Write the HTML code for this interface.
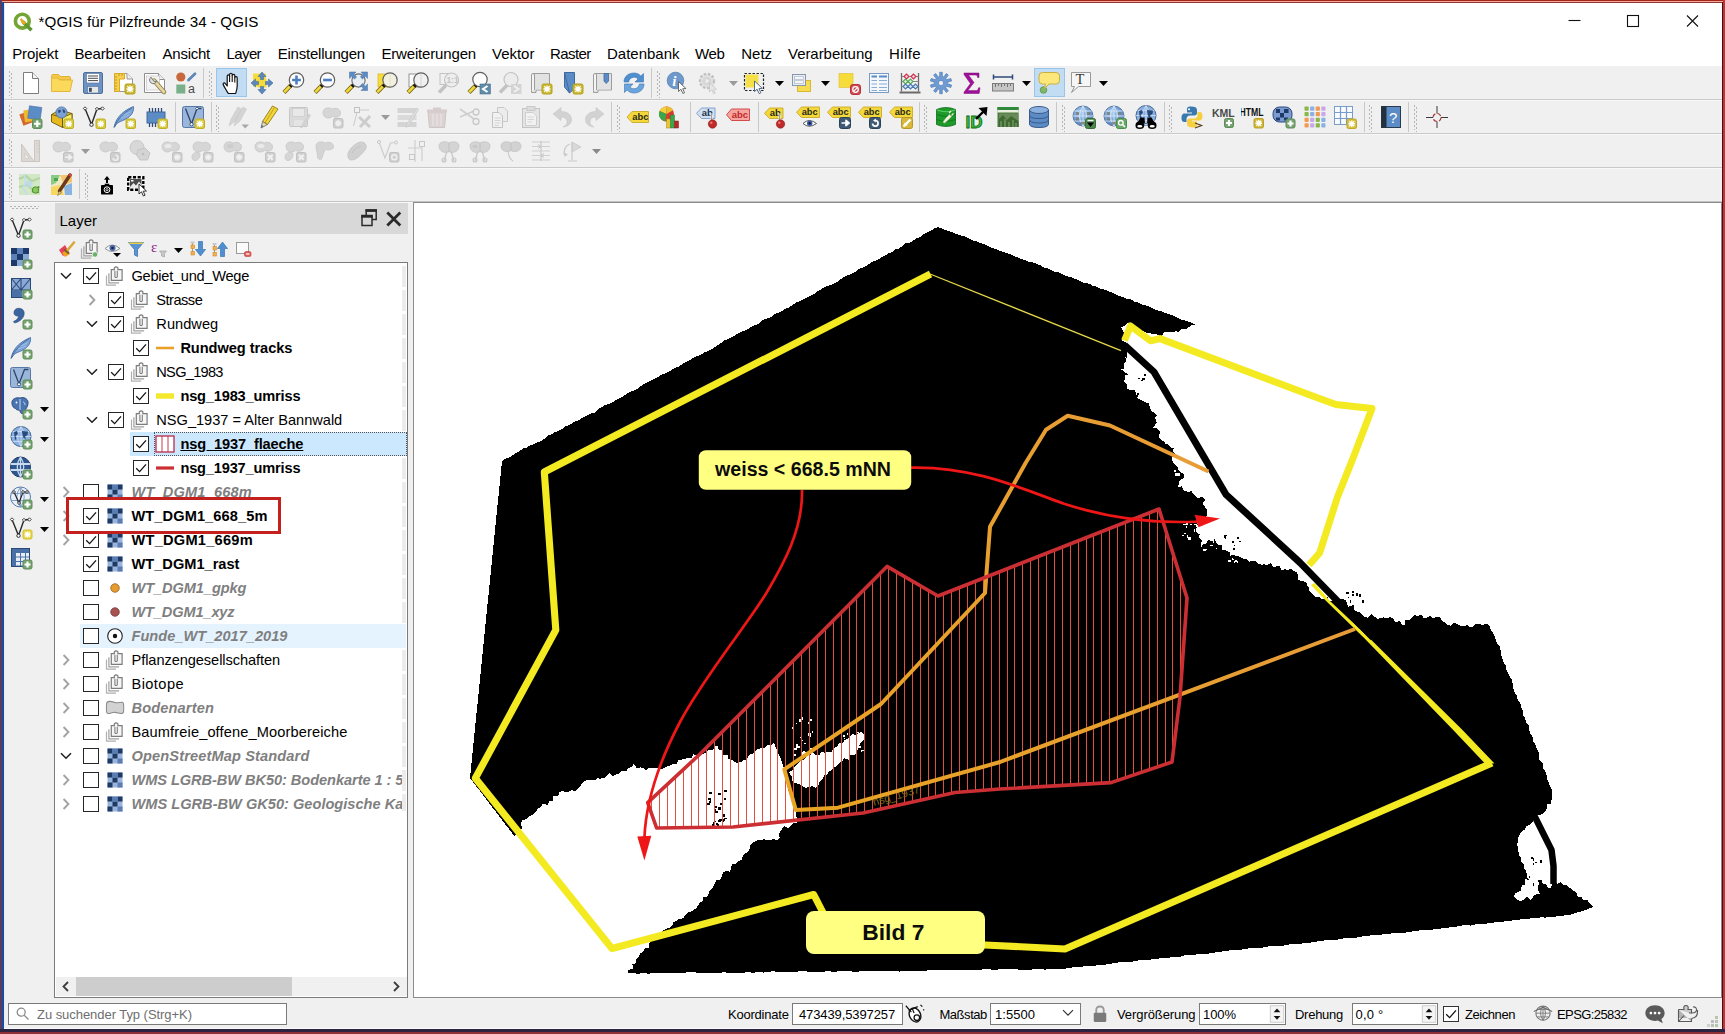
<!DOCTYPE html><html lang="de"><head><meta charset="utf-8"><title>QGIS für Pilzfreunde 34</title><style>
html,body{margin:0;padding:0}
body{width:1725px;height:1034px;position:relative;overflow:hidden;background:#f0f0f0;font-family:"Liberation Sans",sans-serif;color:#000}
.t{position:absolute;white-space:nowrap}
.abs{position:absolute}
.b{position:absolute;box-sizing:border-box}
.hv{position:absolute;width:3px;background-image:radial-gradient(circle,#b4b4b4 0.8px,transparent 1.1px);background-size:3px 4px}
.hh{position:absolute;height:3px;background-image:radial-gradient(circle,#b4b4b4 0.8px,transparent 1.1px);background-size:4px 3px}
.sep{position:absolute;width:1px;background:#c8c8c8}
.cb{position:absolute;box-sizing:border-box;width:16px;height:16px;border:1px solid #262626;background:#fff}
.cb svg{position:absolute;left:0;top:0}
.in{position:absolute;box-sizing:border-box;border:1px solid #7a7a7a;background:#fff}
</style></head><body><div class="b" style="left:0px;top:0px;width:1725px;height:66px;background:#fff;"></div><div class="b" style="left:0px;top:0px;width:1725px;height:1px;background:#a3281a;"></div><div class="b" style="left:0px;top:1px;width:1725px;height:1px;background:#f9a296;"></div><div class="b" style="left:0px;top:2px;width:1725px;height:1px;background:#8c3a36;"></div><div class="b" style="left:0px;top:0px;width:1.5px;height:1034px;background:#5b3b5e;"></div><div class="b" style="left:1.5px;top:2px;width:2px;height:1030px;background:#1d4b9b;"></div><div class="b" style="left:3.5px;top:3px;width:1px;height:1026px;background:#dfeefa;"></div><div class="b" style="left:1722px;top:2px;width:1.5px;height:1030px;background:#3a1414;"></div><div class="b" style="left:1723px;top:0px;width:2px;height:1034px;background:#c6322f;"></div><div class="b" style="left:0px;top:1029px;width:1725px;height:3px;background:#2b2342;"></div><div class="b" style="left:0px;top:1032px;width:1725px;height:2px;background:#8f3036;"></div><div class="b" style="left:4px;top:1028px;width:1718px;height:1px;background:#fbfbfb;"></div><svg class="abs" style="left:12px;top:11px" width="22" height="22" viewBox="0 0 22 22"><circle cx="10.3" cy="10.2" r="6.9" fill="none" stroke="#73a534" stroke-width="3.6"/><path d="M10.5 10.5 L19.5 19.2" stroke="#5e962f" stroke-width="3.6" fill="none"/><path d="M8.2 7.6 L12.6 12.4 L10.6 13.2 Z" fill="#eeb41a"/><path d="M8.6 8 L13.2 12.8" stroke="#e8a818" stroke-width="2.4"/></svg><span class="t" style="left:38.6px;top:12.2px;height:20px;line-height:20px;font-size:15.2px;letter-spacing:0.039px;color:#000;">*QGIS für Pilzfreunde 34 - QGIS</span><svg class="abs" style="left:1560px;top:8px" width="150" height="26" viewBox="0 0 150 26" fill="none" stroke="#111" stroke-width="1.1"><path d="M8.5 12.5H20.5"/><rect x="67.5" y="7.5" width="11" height="11"/><path d="M127 7.5L138 18.5M138 7.5L127 18.5"/></svg><span class="t" style="left:12.2px;top:44.2px;height:20px;line-height:20px;font-size:15.0px;letter-spacing:-0.084px;color:#000;">Projekt</span><span class="t" style="left:74.4px;top:44.2px;height:20px;line-height:20px;font-size:15.0px;letter-spacing:-0.126px;color:#000;">Bearbeiten</span><span class="t" style="left:162.6px;top:44.2px;height:20px;line-height:20px;font-size:15.0px;letter-spacing:-0.256px;color:#000;">Ansicht</span><span class="t" style="left:226.6px;top:44.2px;height:20px;line-height:20px;font-size:15.0px;letter-spacing:-0.625px;color:#000;">Layer</span><span class="t" style="left:277.7px;top:44.2px;height:20px;line-height:20px;font-size:15.0px;letter-spacing:-0.213px;color:#000;">Einstellungen</span><span class="t" style="left:381.4px;top:44.2px;height:20px;line-height:20px;font-size:15.0px;letter-spacing:-0.164px;color:#000;">Erweiterungen</span><span class="t" style="left:492.0px;top:44.2px;height:20px;line-height:20px;font-size:15.0px;letter-spacing:-0.021px;color:#000;">Vektor</span><span class="t" style="left:550.0px;top:44.2px;height:20px;line-height:20px;font-size:15.0px;letter-spacing:-0.580px;color:#000;">Raster</span><span class="t" style="left:607.0px;top:44.2px;height:20px;line-height:20px;font-size:15.0px;letter-spacing:-0.006px;color:#000;">Datenbank</span><span class="t" style="left:695.0px;top:44.2px;height:20px;line-height:20px;font-size:15.0px;letter-spacing:-0.424px;color:#000;">Web</span><span class="t" style="left:741.3px;top:44.2px;height:20px;line-height:20px;font-size:15.0px;letter-spacing:-0.036px;color:#000;">Netz</span><span class="t" style="left:788.0px;top:44.2px;height:20px;line-height:20px;font-size:15.0px;letter-spacing:-0.047px;color:#000;">Verarbeitung</span><span class="t" style="left:889.0px;top:44.2px;height:20px;line-height:20px;font-size:15.0px;letter-spacing:0.398px;color:#000;">Hilfe</span><div class="b" style="left:4px;top:99px;width:1718px;height:1px;background:#c9c9c9;"></div><div class="b" style="left:4px;top:100px;width:1718px;height:1px;background:#f8f8f8;"></div><div class="b" style="left:4px;top:133px;width:1718px;height:1px;background:#c9c9c9;"></div><div class="b" style="left:4px;top:134px;width:1718px;height:1px;background:#f8f8f8;"></div><div class="b" style="left:4px;top:167px;width:1718px;height:1px;background:#c9c9c9;"></div><div class="b" style="left:4px;top:168px;width:1718px;height:1px;background:#f8f8f8;"></div><div class="b" style="left:4px;top:201px;width:1718px;height:1px;background:#c4c4c4;"></div><div class="b" style="left:4px;top:202px;width:1718px;height:1px;background:#f8f8f8;"></div><div class="hv" style="left:8px;top:70px;height:26px"></div><div class="hv" style="left:10px;top:72px;height:26px"></div><svg class="abs" style="left:18.5px;top:71.0px" width="24" height="24" viewBox="0 0 24 24" ><path d="M4.5 1.5H13.5L19.5 7.5V22.5H4.5Z" fill="#fff" stroke="#7d7d7d"/><path d="M13.5 1.5V7.5H19.5" fill="#f2f2f2" stroke="#7d7d7d"/></svg><svg class="abs" style="left:49.5px;top:71.0px" width="24" height="24" viewBox="0 0 24 24" ><path d="M1.5 5.5Q1.5 3.5 3 3.5H8.5L10.5 5.5H19Q20.5 5.5 20.5 7V9H1.5Z" fill="#f5c944" stroke="#dfb13a"/><path d="M1.5 20.5L1.5 7 H8 L9.5 9H22.5L20 20.5Z" fill="#fbd95a" stroke="#e3b63e"/></svg><svg class="abs" style="left:81.0px;top:71.0px" width="24" height="24" viewBox="0 0 24 24" ><path d="M2.5 3Q2.5 1.5 4 1.5H20Q21.5 1.5 21.5 3V21Q21.5 22.5 20 22.5H4Q2.5 22.5 2.5 21Z" fill="#6d93c4" stroke="#50709c"/><rect x="5.5" y="2.5" width="13" height="9.5" fill="#fff" stroke="#50709c" stroke-width=".6"/><path d="M7 5H17M7 7.3H17M7 9.6H17" stroke="#4a4a4a" stroke-width="1"/><rect x="6.5" y="15.5" width="11" height="6.5" fill="#e8e8e8" stroke="#50709c" stroke-width=".6"/><rect x="8" y="16.8" width="2.8" height="4" fill="#3a4a6a"/></svg><svg class="abs" style="left:112.0px;top:71.0px" width="24" height="24" viewBox="0 0 24 24" ><path d="M2.5 2.5H15L20.5 8V20.5H2.5Z" fill="#fff" stroke="#9a9a9a"/><path d="M2.5 2.5H12.5V8H7.5V20.5H2.5Z" fill="#f7d04a" stroke="#d9a92e"/><path d="M3 6H5M3 9H5M3 12H5M3 15H5M3 18H5M7 3V5M10 3V5" stroke="#b08a20" stroke-width=".8"/><path d="M15 2.5V8H20.5" fill="#eee" stroke="#9a9a9a"/><g transform="translate(12.5 12.5)"><rect x="0.5" y="0.5" width="10" height="10" rx="1.6" fill="#c9b72e" stroke="#b3a11f"/><path d="M5.5 2V9 M2 5.5H9 M2.8 2.8L8.2 8.2 M8.2 2.8L2.8 8.2" stroke="#fff" stroke-width="1.3"/></g></svg><svg class="abs" style="left:143.0px;top:71.0px" width="24" height="24" viewBox="0 0 24 24" ><path d="M1.5 2.5H15.5L21.5 8.5V21.5H1.5Z" fill="#fff" stroke="#8e8e8e"/><path d="M15.5 2.5V8.5H21.5" fill="#eee" stroke="#8e8e8e"/><rect x="3.5" y="5" width="13" height="14" fill="#f4f4f4" stroke="#c4c4c4" stroke-width=".7"/><path d="M11 9.5L21 21" stroke="#8a7a4a" stroke-width="4.4" stroke-linecap="round"/><path d="M11 9.5L21 21" stroke="#e6d6a0" stroke-width="2.8" stroke-linecap="round"/><path d="M8 6.2A3.6 3.6 0 1 0 13.6 10.2L11.2 10.6L9.6 8.6Z" fill="#e0e0e0" stroke="#6a6a6a" stroke-width=".9"/></svg><svg class="abs" style="left:174.0px;top:71.0px" width="24" height="24" viewBox="0 0 24 24" ><circle cx="6.8" cy="6" r="4.6" fill="#c9683c"/><path d="M14.5 9L21 2.8" stroke="#5f86b8" stroke-width="2.8" stroke-linecap="round"/><rect x="2.3" y="13.5" width="9" height="9" fill="#79b08a"/><text x="14" y="22.3" font-family="Liberation Sans,sans-serif" font-size="12.5" fill="#4a4a4a">a</text></svg><div class="sep" style="left:203px;top:67.5px;height:30px"></div><div class="hv" style="left:208px;top:70px;height:26px"></div><div class="hv" style="left:210px;top:72px;height:26px"></div><div class="b" style="left:216.4px;top:67.8px;width:30.4px;height:29px;background:#c2dcf3;border:1px solid #98c6ea"></div><svg class="abs" style="left:219.5px;top:71.0px" width="24" height="24" viewBox="0 0 24 24" ><path d="M8.3 22.5C6.5 19.5 4.2 16 3.2 13.6C2.6 12 4.4 11.2 5.4 12.6L7.2 15V5.2C7.2 3.4 9.6 3.4 9.6 5.2V3.6C9.6 1.8 12.2 1.8 12.2 3.6V4.6C12.2 3 14.8 3 14.8 4.8V6.6C14.8 5.2 17.2 5.2 17.2 7V15C17.2 18 16.4 20 15.6 22.5Z" fill="#fff" stroke="#111" stroke-width="1.2" stroke-linejoin="round"/><path d="M9.6 5V11M12.2 4.6V11M14.8 6.6V11.4" stroke="#111" stroke-width="1.1"/></svg><svg class="abs" style="left:250.0px;top:71.0px" width="24" height="24" viewBox="0 0 24 24" ><rect x="3" y="2.5" width="13" height="13" fill="#f6dc3a"/><rect x="7.5" y="7.5" width="9" height="9" fill="#f6dc3a"/><path d="M12 1L16 5.5H13.6V8.5H10.4V5.5H8Z M12 23L16 18.5H13.6V15.5H10.4V18.5H8Z M1 12L5.5 8V10.4H8.5V13.6H5.5V16Z M23 12L18.5 8V10.4H15.5V13.6H18.5V16Z" fill="#5b87bd" stroke="#456f9e" stroke-width=".6"/></svg><svg class="abs" style="left:281.5px;top:71.0px" width="24" height="24" viewBox="0 0 24 24" ><path d="M2 21.5L9 14.2" stroke="#7a6a1a" stroke-width="4.2"/><path d="M2.3 21.2L8.6 14.6" stroke="#f2d93a" stroke-width="2.6"/><path d="M8 15.6L10.2 13.4" stroke="#111" stroke-width="3.4"/><circle cx="14.5" cy="9" r="7.2" fill="#fdfdfd" stroke="#5e5e5e" stroke-width="1.2"/><path d="M14.5 4.6V13.4M10.1 9H18.9" stroke="#4d7fc0" stroke-width="2.6"/></svg><svg class="abs" style="left:312.5px;top:71.0px" width="24" height="24" viewBox="0 0 24 24" ><path d="M2 21.5L9 14.2" stroke="#7a6a1a" stroke-width="4.2"/><path d="M2.3 21.2L8.6 14.6" stroke="#f2d93a" stroke-width="2.6"/><path d="M8 15.6L10.2 13.4" stroke="#111" stroke-width="3.4"/><circle cx="14.5" cy="9" r="7.2" fill="#fdfdfd" stroke="#5e5e5e" stroke-width="1.2"/><path d="M10.1 9H18.9" stroke="#4d7fc0" stroke-width="2.6"/></svg><svg class="abs" style="left:344.0px;top:71.0px" width="24" height="24" viewBox="0 0 24 24" ><path d="M2 21.5L9 14.2" stroke="#7a6a1a" stroke-width="4.2"/><path d="M2.3 21.2L8.6 14.6" stroke="#f2d93a" stroke-width="2.6"/><path d="M8 15.6L10.2 13.4" stroke="#111" stroke-width="3.4"/><circle cx="14.5" cy="9.5" r="6.6" fill="#e9eef4" stroke="#6a6a6a" stroke-width="1.1"/><path d="M5.5 1H12L9.8 3.2L12.6 6L10.5 8.1L7.7 5.3L5.5 7.5Z M23.5 1H17L19.2 3.2L16.4 6L18.5 8.1L21.3 5.3L23.5 7.5Z M23.5 19.5H17L19.2 17.3L16.4 14.5L18.5 12.4L21.3 15.2L23.5 13Z" fill="#5b8cc6" stroke="#46709f" stroke-width=".5"/></svg><svg class="abs" style="left:375.0px;top:71.0px" width="24" height="24" viewBox="0 0 24 24" ><rect x="3" y="3" width="12" height="13" fill="#f6dc3a" stroke="#d9b92e" stroke-width=".8"/><path d="M2 21.5L9 14.2" stroke="#7a6a1a" stroke-width="4.2"/><path d="M2.3 21.2L8.6 14.6" stroke="#f2d93a" stroke-width="2.6"/><path d="M8 15.6L10.2 13.4" stroke="#111" stroke-width="3.4"/><circle cx="15" cy="9" r="7.2" fill="#f1efdf" stroke="#5e5e5e" stroke-width="1.2"/><path d="M15 3V15" stroke="#e4e0c8" stroke-width="1"/></svg><svg class="abs" style="left:406.0px;top:71.0px" width="24" height="24" viewBox="0 0 24 24" ><rect x="3" y="3" width="12" height="13" fill="#fcfcfc" stroke="#8a8a8a" stroke-width=".9"/><path d="M2 21.5L9 14.2" stroke="#7a6a1a" stroke-width="4.2"/><path d="M2.3 21.2L8.6 14.6" stroke="#f2d93a" stroke-width="2.6"/><path d="M8 15.6L10.2 13.4" stroke="#111" stroke-width="3.4"/><circle cx="15" cy="9" r="7.2" fill="#f0f0f0" stroke="#5e5e5e" stroke-width="1.2"/><path d="M15 3V15" stroke="#d6d6d6" stroke-width="1"/></svg><svg class="abs" style="left:436.7px;top:71.0px" width="24" height="24" viewBox="0 0 24 24" ><path d="M2 21.5L9 14.2" stroke="#c2c2c2" stroke-width="3.4"/><rect x="3" y="2.5" width="10" height="11" fill="none" stroke="#c2c2c2"/><circle cx="14.5" cy="9" r="7" fill="#ededed" stroke="#c2c2c2" stroke-width="1.1"/><text x="9.4" y="12.2" font-family="Liberation Sans,sans-serif" font-size="8.5" font-weight="bold" fill="#c4c4c4">1:1</text></svg><svg class="abs" style="left:466.6px;top:71.0px" width="24" height="24" viewBox="0 0 24 24" ><path d="M2 21.5L9 14.2" stroke="#7a6a1a" stroke-width="4.2"/><path d="M2.3 21.2L8.6 14.6" stroke="#f2d93a" stroke-width="2.6"/><path d="M8 15.6L10.2 13.4" stroke="#111" stroke-width="3.4"/><circle cx="13" cy="8.5" r="7.2" fill="#fdfdfd" stroke="#5e5e5e" stroke-width="1.2"/><rect x="13" y="13" width="10.5" height="10" fill="#5f8ba8" stroke="#4a7590" stroke-width=".6"/><path d="M20.5 15L16 18L20.5 21" fill="none" stroke="#fff" stroke-width="2"/></svg><svg class="abs" style="left:497.7px;top:71.0px" width="24" height="24" viewBox="0 0 24 24" ><path d="M2 21.5L9 14.2" stroke="#c2c2c2" stroke-width="3.4"/><circle cx="13" cy="8.5" r="7" fill="#ececec" stroke="#c2c2c2" stroke-width="1.1"/><rect x="13" y="13" width="10.5" height="10" fill="#d4d4d4"/><path d="M16 15L20.5 18L16 21" fill="none" stroke="#f0f0f0" stroke-width="2"/></svg><svg class="abs" style="left:529.0px;top:71.0px" width="24" height="24" viewBox="0 0 24 24" ><path d="M4 2.5H20.5V19H7V21.5H2.5V19.5" fill="#e4e4e4" stroke="#9c9c9c"/><path d="M2.5 19.5V4Q2.5 2.5 4 2.5Q5.5 2.5 5.5 4V19" fill="#f4f4f4" stroke="#9c9c9c"/><rect x="6" y="3" width="14" height="15.5" fill="#e2e2e2"/><g transform="translate(12.5 12.5)"><rect x="0.5" y="0.5" width="10" height="10" rx="1.6" fill="#c9b72e" stroke="#b3a11f"/><path d="M5.5 2V9 M2 5.5H9 M2.8 2.8L8.2 8.2 M8.2 2.8L2.8 8.2" stroke="#fff" stroke-width="1.3"/></g></svg><svg class="abs" style="left:561.0px;top:71.0px" width="24" height="24" viewBox="0 0 24 24" ><path d="M3.5 1.5H13.5V17.5L8.5 22Z M3.5 1.5V16L8.5 22" fill="#5b8cc6" stroke="#3e6aa0"/><g transform="translate(11.5 12.5)"><rect x="0.5" y="0.5" width="10" height="10" rx="1.6" fill="#c9b72e" stroke="#b3a11f"/><path d="M5.5 2V9 M2 5.5H9 M2.8 2.8L8.2 8.2 M8.2 2.8L2.8 8.2" stroke="#fff" stroke-width="1.3"/></g></svg><svg class="abs" style="left:591.0px;top:71.0px" width="24" height="24" viewBox="0 0 24 24" ><path d="M4 2.5H20.5V19H7V21.5H2.5V19.5" fill="#e4e4e4" stroke="#9c9c9c"/><path d="M2.5 19.5V4Q2.5 2.5 4 2.5Q5.5 2.5 5.5 4V19" fill="#f4f4f4" stroke="#9c9c9c"/><rect x="6" y="3" width="14" height="15.5" fill="#e2e2e2"/><path d="M13 2.5H17.5V10L15.2 12.5L13 10Z" fill="#5b8cc6" stroke="#3e6aa0" stroke-width=".8"/></svg><svg class="abs" style="left:622.0px;top:71.0px" width="24" height="24" viewBox="0 0 24 24" ><path d="M2 11C2 5 7 2 12 2C15 2 17.3 3.2 18.8 5L21.5 2.5V11H13L16 8C15 6.8 13.6 6.2 12 6.2C9 6.2 7 8.4 6.6 11Z" fill="#4f8fd0" stroke="#3a74b4" stroke-width=".6"/><path d="M22 13C22 19 17 22 12 22C9 22 6.700 20.800 5.200 19L2.500 21.500V13H11L8 16C9 17.200 10.400 17.800 12 17.800C15 17.800 17 15.600 17.400 13Z" fill="#6aa4dc" stroke="#3a74b4" stroke-width=".6"/></svg><div class="sep" style="left:651px;top:67.5px;height:30px"></div><div class="hv" style="left:655.5px;top:70px;height:26px"></div><div class="hv" style="left:657.5px;top:72px;height:26px"></div><svg class="abs" style="left:666.0px;top:71.0px" width="24" height="24" viewBox="0 0 24 24" ><circle cx="9.5" cy="9.5" r="8.3" fill="#6d99cc" stroke="#5580b4" stroke-width=".8"/><text x="6.3" y="15" font-family="Liberation Serif,serif" font-style="italic" font-weight="bold" font-size="15" fill="#fff">i</text><path transform="translate(12.5 10.5) scale(0.95)" d="M0 0L0 10.5L2.6 8.2L4.6 12.6L6.4 11.8L4.4 7.6L7.8 7.4Z" fill="#fff" stroke="#555" stroke-width="0.9" stroke-linejoin="round"/></svg><svg class="abs" style="left:697.0px;top:71.0px" width="24" height="24" viewBox="0 0 24 24" ><circle cx="10" cy="10" r="7" fill="#e4e4e4" stroke="#c2c2c2" stroke-width="2.4" stroke-dasharray="2.6 1.6"/><circle cx="10" cy="10" r="4.6" fill="#d6d6d6"/><path d="M8.6 7.6L12.6 10L8.6 12.4Z" fill="#eee"/><path transform="translate(12.5 11.5) scale(0.9)" d="M0 0L0 10.5L2.6 8.2L4.6 12.6L6.4 11.8L4.4 7.6L7.8 7.4Z" fill="#e6e6e6" stroke="#c6c6c6" stroke-width="0.9" stroke-linejoin="round"/></svg><svg class="abs" style="left:743.0px;top:71.0px" width="24" height="24" viewBox="0 0 24 24" ><rect x="1.5" y="2.5" width="19" height="17" fill="none" stroke="#222" stroke-width="1.2" stroke-dasharray="2.4 1.6"/><rect x="2.5" y="3.5" width="13" height="13" fill="#f6e04a"/><path transform="translate(11.5 10) scale(1)" d="M0 0L0 10.5L2.6 8.2L4.6 12.6L6.4 11.8L4.4 7.6L7.8 7.4Z" fill="#fff" stroke="#46607e" stroke-width="0.9" stroke-linejoin="round"/></svg><svg class="abs" style="left:789.0px;top:71.0px" width="24" height="24" viewBox="0 0 24 24" ><rect x="8.5" y="9.5" width="13" height="11" fill="#f6dc50" stroke="#d9b92e"/><rect x="3.5" y="3.5" width="13" height="11" fill="#e8eef6" stroke="#8a97a8"/><rect x="5.5" y="5.8" width="9" height="2.4" fill="#fff" stroke="#9aa6b6" stroke-width=".6"/><rect x="5.5" y="9.8" width="9" height="2.4" fill="#fff" stroke="#9aa6b6" stroke-width=".6"/></svg><svg class="abs" style="left:836.7px;top:71.0px" width="24" height="24" viewBox="0 0 24 24" ><rect x="2" y="2.5" width="14" height="14" fill="#f6dc3a" stroke="#e0c030" stroke-width=".6"/><rect x="13.5" y="13.5" width="10" height="10" rx="2.2" fill="#d04a52" stroke="#b83038"/><circle cx="18.5" cy="18.5" r="2.8" fill="none" stroke="#fff" stroke-width="1.3"/><path d="M16.600 20.400L20.400 16.6" stroke="#fff" stroke-width="1.3"/></svg><svg class="abs" style="left:866.6px;top:71.0px" width="24" height="24" viewBox="0 0 24 24" ><rect x="2.5" y="2.5" width="19" height="19" fill="#f4f8fc" stroke="#7a9cc4"/><path d="M4.500 5.500H10M12 5.500H20" stroke="#5b8cc6" stroke-width="2"/><path d="M4.500 9.500H10M12 9.500H20M4.500 13H10M12 13H20M4.500 16.500H10M12 16.500H20M4.500 19.500H10M12 19.500H20" stroke="#8cacd0" stroke-width="1.1"/></svg><svg class="abs" style="left:897.8px;top:71.0px" width="24" height="24" viewBox="0 0 24 24" ><path d="M3.500 2V20.500M20.500 2V20.5" stroke="#6a6a6a" stroke-width="1.3"/><path d="M1.500 21.500H22.5" stroke="#6a6a6a" stroke-width="2"/><path d="M3.500 5.500H20.500M3.500 10.500H20.500M3.500 15.500H20.5" stroke="#7a7a7a" stroke-width=".9"/><g stroke-width="1.1" fill="#fff"><path d="M6 5.500L8.500 3L11 5.500L8.500 8Z M13 5.500L15.500 3L18 5.500L15.500 8Z" stroke="#d03050" fill="#f8d0d8"/><path d="M5 10.500L7.500 8L10 10.500L7.500 13Z M10 10.500L12.500 8L15 10.500L12.500 13Z" stroke="#58a858" fill="#d8f0d8"/><path d="M5 15.500L7.500 13L10 15.500L7.500 18Z M10 15.500L12.500 13L15 15.500L12.500 18Z M15 15.500L17.500 13L20 15.500L17.500 18Z" stroke="#4a7ab0" fill="#d8e6f6"/></g></svg><svg class="abs" style="left:929.0px;top:71.0px" width="24" height="24" viewBox="0 0 24 24" ><path d="M10.71 1.28L13.29 1.28L13.31 5.53L14.75 6.00L17.26 2.57L19.35 4.09L16.86 7.54L17.75 8.76L21.80 7.46L22.60 9.92L18.56 11.25L18.56 12.76L22.60 14.08L21.80 16.54L17.75 15.25L16.86 16.47L19.35 19.91L17.26 21.43L14.74 18.00L13.30 18.47L13.29 22.72L10.71 22.72L10.69 18.47L9.25 18.00L6.74 21.43L4.65 19.91L7.14 16.46L6.25 15.24L2.20 16.54L1.40 14.08L5.44 12.75L5.44 11.24L1.40 9.92L2.20 7.46L6.25 8.75L7.14 7.53L4.65 4.09L6.74 2.57L9.26 6.00L10.70 5.53Z" fill="#6f9ad2" stroke="#4f7cb8" stroke-width=".7" stroke-linejoin="round"/><circle cx="12" cy="12" r="2.6" fill="#f0f0f0" stroke="#4f7cb8" stroke-width=".7"/></svg><svg class="abs" style="left:960.0px;top:71.0px" width="24" height="24" viewBox="0 0 24 24" ><path d="M4 2H19V6.500H17.600C17.400 4.600 16.800 4 15 4H8.500L14 11.500L7.800 19.600H15.600C17.600 19.600 18.200 18.800 18.600 16.800H20L19.200 22.500H4V21.300L10.400 12.600L4 3.500Z" fill="#a0109a" stroke="#7c0a78" stroke-width=".5"/></svg><svg class="abs" style="left:991.0px;top:71.0px" width="24" height="24" viewBox="0 0 24 24" ><path d="M2.500 3.500V8.500M21.500 3.500V8.500M2.500 6H21.5" stroke="#2e4a78" stroke-width="1.5" fill="none"/><rect x="1.5" y="12.5" width="21" height="7.5" fill="#c6c6c6" stroke="#7c7c7c"/><path d="M4.500 13V16M7.500 13V15M10.500 13V16M13.500 13V15M16.500 13V16M19.500 13V15" stroke="#6a6a6a" stroke-width=".9"/></svg><svg class="abs" style="left:1068.5px;top:71.0px" width="24" height="24" viewBox="0 0 24 24" ><path d="M2.500 1.500H21.500V15.500H9.500L2.500 21.500L5.500 15.500H2.500Z" fill="#f6f6f6" stroke="#9a9a9a" stroke-width="1"/><text x="6.5" y="13" font-family="Liberation Serif,serif" font-size="14.5" fill="#3a3a3a">T</text></svg><svg class="abs" style="left:728.5px;top:81.0px" width="9" height="5" viewBox="0 0 9 5"><path d="M0 0H9L4.5 5Z" fill="#9a9a9a"/></svg><svg class="abs" style="left:774.5px;top:81.0px" width="9" height="5" viewBox="0 0 9 5"><path d="M0 0H9L4.5 5Z" fill="#000"/></svg><svg class="abs" style="left:820.5px;top:81.0px" width="9" height="5" viewBox="0 0 9 5"><path d="M0 0H9L4.5 5Z" fill="#000"/></svg><svg class="abs" style="left:1021.9px;top:81.0px" width="9" height="5" viewBox="0 0 9 5"><path d="M0 0H9L4.5 5Z" fill="#000"/></svg><svg class="abs" style="left:1099.2px;top:81.0px" width="9" height="5" viewBox="0 0 9 5"><path d="M0 0H9L4.5 5Z" fill="#000"/></svg><div class="b" style="left:1034px;top:67.8px;width:30.8px;height:29px;background:#c2dcf3;border:1px solid #98c6ea"></div><svg class="abs" style="left:1037.0px;top:71.0px" width="24" height="24" viewBox="0 0 24 24" ><circle cx="6.5" cy="19" r="3.3" fill="#7fb86a" stroke="#5a9448" stroke-width=".8"/><path d="M5.500 1.500H19Q22.500 1.500 22.500 5V9.500Q22.500 13 19 13H12L7.500 17.500L8.500 13H5.500Q2 13 2 9.500V5Q2 1.500 5.500 1.500Z" fill="#fbe77a" stroke="#c9b040" stroke-width="1"/></svg><div class="hv" style="left:8px;top:104px;height:26px"></div><div class="hv" style="left:10px;top:106px;height:26px"></div><svg class="abs" style="left:19.0px;top:105.0px" width="24" height="24" viewBox="0 0 24 24" ><rect x="2" y="7" width="12" height="12" fill="#d2692e" transform="rotate(-20 8 13)"/><rect x="5" y="4.5" width="12" height="12" fill="#efb92e" transform="rotate(-8 11 10)"/><rect x="9.5" y="1.5" width="12.5" height="12.5" fill="#5b8cc6" stroke="#4674aa" stroke-width=".6" transform="rotate(8 15 8)"/><g transform="translate(13 13.5)"><rect x="0.5" y="0.5" width="9.5" height="9.5" rx="1.8" fill="#74a36f" stroke="#5e8c5a"/><path d="M5.25 2V8.5 M2 5.25H8.5" stroke="#fff" stroke-width="2.2"/></g></svg><svg class="abs" style="left:50.0px;top:105.0px" width="24" height="24" viewBox="0 0 24 24" ><path d="M1.500 9.500L9.500 5L22 8.500V18.500L12.500 22.500L1.500 17Z" fill="#e8b820" stroke="#6a5a10" stroke-width=".9"/><path d="M12.500 12.500L22 8.500V18.500L12.500 22.500Z" fill="#f8ec60" stroke="#6a5a10" stroke-width=".9"/><path d="M1.500 9.500L12.500 12.500V22.5" fill="none" stroke="#6a5a10" stroke-width=".9"/><circle cx="11.5" cy="7.5" r="5.6" fill="#7aa2d6" stroke="#4a6a9a" stroke-width=".8"/><path d="M8 5.500Q10 4 11 6Q10 8.500 8.500 8Z M12.500 4Q15 4.500 15.500 7Q14 9 13 7Z" fill="#2e4a7a"/><g transform="translate(13.5 13.5)"><rect x="0.5" y="0.5" width="9.5" height="9.5" rx="1.6" fill="#d8ca40" stroke="#bfae28"/><path d="M5.25 2V8.5 M2 5.25H8.5 M2.8 2.8L7.7 7.7 M7.7 2.8L2.8 7.7" stroke="#fff" stroke-width="1.3"/></g></svg><svg class="abs" style="left:81.5px;top:105.0px" width="24" height="24" viewBox="0 0 24 24" ><path d="M3 3.500L9.500 19.500L15 4L20.500 3.5" fill="none" stroke="#2a2a2a" stroke-width="1.4"/><path d="M3 1.800L4.700 3.500L3 5.200L1.300 3.500Z M15 2.300L16.700 4L15 5.700L13.300 4Z M20.500 1.800L22.200 3.500L20.500 5.200L18.800 3.500Z" fill="#fff" stroke="#2a2a2a" stroke-width=".9"/><circle cx="9.5" cy="19.7" r="1.7" fill="#fff" stroke="#2a2a2a" stroke-width="1"/><g transform="translate(13.5 13.5)"><rect x="0.5" y="0.5" width="9.5" height="9.5" rx="1.6" fill="#d8ca40" stroke="#bfae28"/><path d="M5.25 2V8.5 M2 5.25H8.5 M2.8 2.8L7.7 7.7 M7.7 2.8L2.8 7.7" stroke="#fff" stroke-width="1.3"/></g></svg><svg class="abs" style="left:112.0px;top:105.0px" width="24" height="24" viewBox="0 0 24 24" ><path d="M2 22.500C3.500 15 8 7 21.500 1.500C22 6 20 11 13 14.500C10 16 6 17 4.500 19Z" fill="#7fa6d8" stroke="#4a72a8" stroke-width=".9"/><path d="M2.500 22C5 15 11 8 20 3" fill="none" stroke="#3e6498" stroke-width=".9"/><path d="M9 13L17 10M11.500 10L18.500 7" stroke="#a8c4e8" stroke-width=".8"/><g transform="translate(13.5 13.5)"><rect x="0.5" y="0.5" width="9.5" height="9.5" rx="1.6" fill="#d8ca40" stroke="#bfae28"/><path d="M5.25 2V8.5 M2 5.25H8.5 M2.8 2.8L7.7 7.7 M7.7 2.8L2.8 7.7" stroke="#fff" stroke-width="1.3"/></g></svg><svg class="abs" style="left:144.0px;top:105.0px" width="24" height="24" viewBox="0 0 24 24" ><rect x="3" y="7" width="18" height="11" fill="#5b8cc6" stroke="#3e6aa0"/><path d="M5.500 3V7M8.500 3V7M11.500 3V7M14.500 3V7M17.500 3V7M5.500 18V22M8.500 18V22M11.500 18V22" stroke="#2e4a78" stroke-width="1.3"/><g transform="translate(13.5 13.5)"><rect x="0.5" y="0.5" width="9.5" height="9.5" rx="1.6" fill="#d8ca40" stroke="#bfae28"/><path d="M5.25 2V8.5 M2 5.25H8.5 M2.8 2.8L7.7 7.7 M7.7 2.8L2.8 7.7" stroke="#fff" stroke-width="1.3"/></g></svg><svg class="abs" style="left:181.0px;top:105.0px" width="24" height="24" viewBox="0 0 24 24" ><rect x="1.5" y="1.5" width="21" height="21" rx="2" fill="#9ab6da" stroke="#5578a8"/><path d="M4.500 3.500L10.500 19L16 3.500L20.500 3.5" fill="none" stroke="#2e4468" stroke-width="1.3"/><circle cx="10.5" cy="19.3" r="1.6" fill="#fff" stroke="#2e4468" stroke-width=".9"/><path d="M16 2L17.500 3.500L16 5L14.500 3.500Z" fill="#fff" stroke="#2e4468" stroke-width=".8"/><g transform="translate(13.5 13.5)"><rect x="0.5" y="0.5" width="9.5" height="9.5" rx="1.6" fill="#d8ca40" stroke="#bfae28"/><path d="M5.25 2V8.5 M2 5.25H8.5 M2.8 2.8L7.7 7.7 M7.7 2.8L2.8 7.7" stroke="#fff" stroke-width="1.3"/></g></svg><div class="sep" style="left:174.5px;top:101.5px;height:30px"></div><div class="sep" style="left:210.6px;top:101.5px;height:30px"></div><div class="hv" style="left:215px;top:104px;height:26px"></div><div class="hv" style="left:217px;top:106px;height:26px"></div><svg class="abs" style="left:226.0px;top:105.0px" width="24" height="24" viewBox="0 0 24 24" ><path d="M3 21L5 14L12 2L15.500 4L9 16Z M8 21L10 14L17 2L20.500 4L14 16Z" fill="#d4d4d4" stroke="#c8c8c8" stroke-width=".6"/><path d="M15.500 19.500H23L19.200 23.500Z" fill="#a8a8a8"/></svg><svg class="abs" style="left:257.0px;top:105.0px" width="24" height="24" viewBox="0 0 24 24" ><path d="M15.500 1L21 4L10.500 19.500L5.500 16.500Z" fill="#f2d63a" stroke="#8a7a1a" stroke-width=".9"/><path d="M17.600 2.200L8 18" stroke="#c8a820" stroke-width="1.1"/><path d="M5.500 16.500L10.500 19.500L4 23Z" fill="#e8d8b0" stroke="#6a6a5a" stroke-width=".8"/><path d="M4 23L4.800 20L6.500 21.300Z" fill="#4a6a9a"/></svg><svg class="abs" style="left:287.0px;top:105.0px" width="24" height="24" viewBox="0 0 24 24" ><rect x="2.5" y="2.5" width="18" height="19" rx="1" fill="#dadada" stroke="#c6c6c6"/><rect x="5.5" y="3.5" width="12" height="8" fill="#e8e8e8" stroke="#cacaca" stroke-width=".7"/><rect x="7" y="15" width="9" height="6" fill="#e4e4e4"/><path d="M22 9L15 20L13.500 23L16.500 21.500L23.500 10.500Z" fill="#d6d6d6" stroke="#c4c4c4" stroke-width=".6"/></svg><svg class="abs" style="left:319.5px;top:105.0px" width="24" height="24" viewBox="0 0 24 24" ><path d="M3 7.500C3 2.500 9 2 12.500 4C15 2.500 21 3.500 20.500 8.500C20 13 15 12.500 12.500 11.500C9 14.500 3 13 3 7.500Z" fill="#d6d6d6" stroke="#c6c6c6" stroke-width=".8"/><rect x="13.5" y="13.5" width="9.5" height="9.5" rx="1.6" fill="#cfcfcf" stroke="#c2c2c2"/><path d="M18.250 15V21.500M15 18.250H21.500M16 16L20.500 20.500M20.500 16L16 20.5" stroke="#f0f0f0" stroke-width="1.4"/></svg><svg class="abs" style="left:349.5px;top:105.0px" width="24" height="24" viewBox="0 0 24 24" ><rect x="4.5" y="2.5" width="5" height="5" fill="none" stroke="#c2c2c2"/><path d="M7 7.500L3.500 21M9.500 5H19" stroke="#cacaca" stroke-width="1"/><path d="M9 12L20 22M20 11L10 22" stroke="#cccccc" stroke-width="3"/></svg><svg class="abs" style="left:395.5px;top:105.0px" width="24" height="24" viewBox="0 0 24 24" ><rect x="1.5" y="3" width="19" height="5" fill="#d4d4d4"/><rect x="1.5" y="10" width="19" height="5" fill="#dadada"/><rect x="1.5" y="17" width="19" height="5" fill="#d4d4d4"/><path d="M20.500 3L11 19L10 22.500L13 20.500L22.500 4.500Z" fill="#dcdcdc" stroke="#c8c8c8" stroke-width=".7"/></svg><svg class="abs" style="left:425.4px;top:105.0px" width="24" height="24" viewBox="0 0 24 24" ><path d="M3 7H21L19.500 22.500H4.500Z" fill="#dcd4d4" stroke="#cdc4c4"/><path d="M2 4.500H22V7H2Z M8 2.500H16V4.500H8Z" fill="#d6cccc"/><path d="M8 9V20.500M12 9V20.500M16 9V20.5" stroke="#e8e2e2" stroke-width="1.4"/></svg><svg class="abs" style="left:458.0px;top:105.0px" width="24" height="24" viewBox="0 0 24 24" ><path d="M2 4L16 14M2 12L16 6" stroke="#cecece" stroke-width="1.6"/><circle cx="18" cy="7" r="3" fill="none" stroke="#c8c8c8" stroke-width="1.3"/><circle cx="18" cy="16.5" r="3" fill="none" stroke="#c8c8c8" stroke-width="1.3"/></svg><svg class="abs" style="left:488.0px;top:105.0px" width="24" height="24" viewBox="0 0 24 24" ><path d="M9.500 2.500H16L19.500 6V16.500H9.500Z" fill="#ececec" stroke="#c8c8c8"/><path d="M4.500 7.500H11L14.500 11V22.500H4.500Z" fill="#f2f2f2" stroke="#c2c2c2"/><path d="M6.500 13H12.500M6.500 15.500H12.500M6.500 18H12.500M6.500 20.500H11" stroke="#d0d0d0" stroke-width=".9"/></svg><svg class="abs" style="left:519.0px;top:105.0px" width="24" height="24" viewBox="0 0 24 24" ><rect x="3.5" y="3.5" width="17" height="19" fill="#e4e4e4" stroke="#c4c4c4"/><rect x="8" y="1.5" width="8" height="4" fill="#dcdcdc" stroke="#c4c4c4" stroke-width=".8"/><path d="M6.500 7.500H14L17.500 11V20.500H6.500Z" fill="#f2f2f2" stroke="#c6c6c6" stroke-width=".8"/><path d="M8.500 12H15M8.500 14.500H15M8.500 17H13" stroke="#d0d0d0" stroke-width=".9"/></svg><svg class="abs" style="left:551.0px;top:105.0px" width="24" height="24" viewBox="0 0 24 24" ><path d="M2 9L10 2.500V6.500C16 6.500 20.500 9.500 20.500 14.500C20.500 19 17 21.500 12 22C15 20.500 16.500 18.500 16 16C15.500 13 13 12 10 12V15.500Z" fill="#d2d2d2" stroke="#c6c6c6" stroke-width=".6"/></svg><svg class="abs" style="left:581.7px;top:105.0px" width="24" height="24" viewBox="0 0 24 24" ><path d="M22 9L14 2.500V6.500C8 6.500 3.500 9.500 3.500 14.500C3.500 19 7 21.500 12 22C9 20.500 7.500 18.500 8 16C8.500 13 11 12 14 12V15.500Z" fill="#d2d2d2" stroke="#c6c6c6" stroke-width=".6"/></svg><svg class="abs" style="left:380.5px;top:115.0px" width="9" height="5" viewBox="0 0 9 5"><path d="M0 0H9L4.5 5Z" fill="#9a9a9a"/></svg><div class="sep" style="left:611.4px;top:101.5px;height:30px"></div><div class="hv" style="left:616px;top:104px;height:26px"></div><div class="hv" style="left:618px;top:106px;height:26px"></div><svg class="abs" style="left:626.0px;top:105.0px" width="24" height="24" viewBox="0 0 24 24" ><path d="M1 12L6 6.5H22.5V17.5H6Z" fill="#f4d83a" stroke="#c9a92a" stroke-width=".9" stroke-linejoin="round"/><text x="6.2" y="15.2" font-family="Liberation Sans,sans-serif" font-weight="bold" font-size="9.4" fill="#2a2a1a">abc</text></svg><svg class="abs" style="left:657.0px;top:105.0px" width="24" height="24" viewBox="0 0 24 24" ><circle cx="9.5" cy="9" r="7.5" fill="#d83a2e"/><path d="M9.500 9L9.500 1.500A7.500 7.500 0 0 0 2.600 6Z" fill="#f2d23a"/><path d="M9.500 9L2.600 6A7.500 7.500 0 0 0 8 16.400Z" fill="#3aa84a"/><path d="M9.500 9L9.500 1.500A7.500 7.500 0 0 1 16 5.200Z" fill="#e8c030"/><rect x="9.5" y="14" width="4" height="9" fill="#e8c830" stroke="#a08a20" stroke-width=".5"/><rect x="13.5" y="10" width="4" height="13" fill="#3aa84a" stroke="#2a7a36" stroke-width=".5"/><rect x="17.5" y="16" width="4" height="7" fill="#b82a26" stroke="#801a18" stroke-width=".5"/></svg><svg class="abs" style="left:696.0px;top:105.0px" width="24" height="24" viewBox="0 0 24 24" ><path d="M0.5 8.25L5.5 3H19V13.5H5.5Z" fill="#cfe0f4" stroke="#7a9cc8" stroke-width=".9" stroke-linejoin="round"/><text x="5.7" y="11.2" font-family="Liberation Sans,sans-serif" font-weight="bold" font-size="9.5" fill="#24364e">ab</text><path d="M15.500 8V16" stroke="#e8e8e8" stroke-width="2.2"/><path d="M15.500 8V16" stroke="#8a8a9a" stroke-width=".8"/><circle cx="16.5" cy="19" r="4.2" fill="#c02a2a" stroke="#8a1a1a" stroke-width=".6"/><circle cx="15.3" cy="17.7" r="1.2" fill="#e87a70"/></svg><svg class="abs" style="left:725.8px;top:105.0px" width="24" height="24" viewBox="0 0 24 24" ><path d="M0.5 9.75L5.5 4H23.5V15.5H5.5Z" fill="#f6a6a0" stroke="#d03a3a" stroke-width=".9" stroke-linejoin="round"/><text x="5.7" y="13.2" font-family="Liberation Sans,sans-serif" font-weight="bold" font-size="9.5" fill="#c02a2a">abc</text></svg><svg class="abs" style="left:764.4px;top:105.0px" width="24" height="24" viewBox="0 0 24 24" ><path d="M0.5 8.25L5.5 3H19V13.5H5.5Z" fill="#f4d83a" stroke="#c9a92a" stroke-width=".9" stroke-linejoin="round"/><text x="5.7" y="11.2" font-family="Liberation Sans,sans-serif" font-weight="bold" font-size="9.5" fill="#2a2a1a">ab</text><path d="M15.500 8V16" stroke="#e8e8e8" stroke-width="2.2"/><path d="M15.500 8V16" stroke="#8a8a9a" stroke-width=".8"/><circle cx="16.5" cy="19" r="4.2" fill="#c02a2a" stroke="#8a1a1a" stroke-width=".6"/><circle cx="15.3" cy="17.7" r="1.2" fill="#e87a70"/></svg><svg class="abs" style="left:795.6px;top:105.0px" width="24" height="24" viewBox="0 0 24 24" ><path d="M0.5 7.25L5.5 2H23.5V12.5H5.5Z" fill="#f4d83a" stroke="#c9a92a" stroke-width=".9" stroke-linejoin="round"/><text x="5.7" y="10.2" font-family="Liberation Sans,sans-serif" font-weight="bold" font-size="9.3" fill="#2a2a1a">abc</text><path d="M7 18.500Q13 12.500 20.500 18.500Q13 24 7 18.500Z" fill="#fff" stroke="#4a4a4a" stroke-width=".9"/><circle cx="13.7" cy="18.3" r="2.7" fill="#3a5aa8"/><circle cx="13.7" cy="18.3" r="1.1" fill="#111"/></svg><svg class="abs" style="left:826.8px;top:105.0px" width="24" height="24" viewBox="0 0 24 24" ><path d="M0.5 7.25L5.5 2H23.5V12.5H5.5Z" fill="#f4d83a" stroke="#c9a92a" stroke-width=".9" stroke-linejoin="round"/><text x="5.7" y="10.2" font-family="Liberation Sans,sans-serif" font-weight="bold" font-size="9.3" fill="#2a2a1a">abc</text><rect x="12.5" y="12.5" width="11" height="11" rx="2" fill="#3e5a74" stroke="#2a4258"/><path d="M14.500 18H19V15.300L22.300 18L19 20.700V18" fill="#fff" stroke="#fff" stroke-width="1.6" stroke-linejoin="round"/></svg><svg class="abs" style="left:858.0px;top:105.0px" width="24" height="24" viewBox="0 0 24 24" ><path d="M0.5 7.25L5.5 2H23.5V12.5H5.5Z" fill="#f4d83a" stroke="#c9a92a" stroke-width=".9" stroke-linejoin="round"/><text x="5.7" y="10.2" font-family="Liberation Sans,sans-serif" font-weight="bold" font-size="9.3" fill="#2a2a1a">abc</text><rect x="11.5" y="12.5" width="11" height="11" rx="2" fill="#3e5a74" stroke="#2a4258"/><path d="M14.500 18.500A2.800 2.800 0 1 0 17.300 15.5" fill="none" stroke="#fff" stroke-width="1.7"/><path d="M17.800 13.500L15 15.600L17.800 17.500Z" fill="#fff"/></svg><svg class="abs" style="left:889.0px;top:105.0px" width="24" height="24" viewBox="0 0 24 24" ><path d="M0.5 7.25L5.5 2H23.5V12.5H5.5Z" fill="#f4d83a" stroke="#c9a92a" stroke-width=".9" stroke-linejoin="round"/><text x="5.7" y="10.2" font-family="Liberation Sans,sans-serif" font-weight="bold" font-size="9.3" fill="#2a2a1a">abc</text><rect x="12.5" y="12.5" width="11" height="11" rx="2" fill="#d8b83a" stroke="#b8982a"/><path d="M21.500 14.500L16 20L14.500 21.5" stroke="#fff" stroke-width="2.4"/><path d="M15.500 18L18 20.5" stroke="#fff" stroke-width="1.2"/></svg><div class="sep" style="left:689.7px;top:101.5px;height:30px"></div><div class="sep" style="left:758px;top:101.5px;height:30px"></div><div class="sep" style="left:918.5px;top:101.5px;height:30px"></div><div class="hv" style="left:923px;top:104px;height:26px"></div><div class="hv" style="left:925px;top:106px;height:26px"></div><svg class="abs" style="left:934.0px;top:105.0px" width="24" height="24" viewBox="0 0 24 24" ><path d="M2.500 4.500Q12 0.500 21.500 4.500V19.500Q12 23.500 2.500 19.500Z" fill="#1e9a2a" stroke="#0e6a18" stroke-width=".8"/><path d="M2.500 9.500Q12 13 21.500 9.500M2.500 14.500Q12 18 21.500 14.5" fill="none" stroke="#0e7a1a" stroke-width="1"/><path d="M3 5Q12 8.500 21 5" fill="none" stroke="#5ad064" stroke-width="1.2"/><path d="M9 17L12 13L15.500 9.500L17.500 11.500L14 15L10.500 18Z" fill="#f4f4e0" stroke="#c8c8a0" stroke-width=".5"/><path d="M15 8L17 6M17.500 10.500L19.500 8.5" stroke="#f4f4e0" stroke-width="1.2"/></svg><svg class="abs" style="left:964.6px;top:105.0px" width="24" height="24" viewBox="0 0 24 24" ><text x="0.500" y="22.500" font-family="Liberation Sans,sans-serif" font-weight="bold" font-size="16" fill="#3cc03c" stroke="#0e6a12" stroke-width=".8" textLength="17" lengthAdjust="spacingAndGlyphs">ID</text><path d="M11 14L19 6" stroke="#000" stroke-width="2.400"/><path d="M13.500 3L22.500 2L21.500 11Z" fill="#000"/></svg><svg class="abs" style="left:996.0px;top:105.0px" width="24" height="24" viewBox="0 0 24 24" ><rect x="1.5" y="2" width="21" height="20" fill="#4a7a3a"/><rect x="1.5" y="2" width="21" height="3" fill="#2e8a3a"/><rect x="1.5" y="5" width="21" height="2.5" fill="#e8f0e0"/><rect x="3" y="8.5" width="19.5" height="13.5" fill="#6a8a5a"/><path d="M3 14L7 10L11 15L15 11L22.500 16V22H3Z" fill="#3e6a32"/><path d="M5 22V16M9 22V14M13 22V17M17 22V15M20 22V18" stroke="#8aa878" stroke-width="1"/></svg><svg class="abs" style="left:1026.7px;top:105.0px" width="24" height="24" viewBox="0 0 24 24" ><path d="M2.500 5V19Q2.500 22.500 12 22.500Q21.500 22.500 21.500 19V5" fill="#5b8cc6" stroke="#3a5a88"/><ellipse cx="12" cy="5" rx="9.5" ry="3.5" fill="#8ab0e0" stroke="#3a5a88"/><path d="M2.500 10Q2.500 13.500 12 13.500Q21.500 13.500 21.500 10M2.500 14.500Q2.500 18 12 18Q21.500 18 21.500 14.5" fill="none" stroke="#3a5a88"/></svg><div class="sep" style="left:1056px;top:101.5px;height:30px"></div><div class="hv" style="left:1061px;top:104px;height:26px"></div><div class="hv" style="left:1063px;top:106px;height:26px"></div><svg class="abs" style="left:1072.0px;top:105.0px" width="24" height="24" viewBox="0 0 24 24" ><defs><radialGradient id="gg" cx=".4" cy=".35" r=".7"><stop offset="0" stop-color="#a8d0f4"/><stop offset="1" stop-color="#4a78b8"/></radialGradient></defs><circle cx="11" cy="11" r="10" fill="url(#gg)" stroke="#4a6a9a" stroke-width=".8"/><path d="M11 1V21M1 11H21M2.500 6H19.500M2.500 16H19.5" stroke="#d8e6f6" stroke-width=".9" fill="none"/><path d="M11 1Q4 11 11 21M11 1Q18 11 11 21" stroke="#d8e6f6" stroke-width=".9" fill="none"/><path d="M4 7H7V10H4ZM15 7H18V10H15ZM4 12.500H7V15.500H4ZM15 12.500H18V15.500H15ZM8.500 17H13V19.500H8.500Z" fill="#7a7a6a" opacity=".75"/><rect x="13.5" y="13.5" width="10" height="10" rx="1.8" fill="#4a8a4a" stroke="#3a6a3a"/><path d="M15 17.500H22L18.500 22Z" fill="#0"/><path d="M15.500 15.500H21.5" stroke="#fff" stroke-width="1.4"/></svg><svg class="abs" style="left:1103.0px;top:105.0px" width="24" height="24" viewBox="0 0 24 24" ><defs><radialGradient id="gg" cx=".4" cy=".35" r=".7"><stop offset="0" stop-color="#a8d0f4"/><stop offset="1" stop-color="#4a78b8"/></radialGradient></defs><circle cx="11" cy="11" r="10" fill="url(#gg)" stroke="#4a6a9a" stroke-width=".8"/><path d="M11 1V21M1 11H21M2.500 6H19.500M2.500 16H19.5" stroke="#d8e6f6" stroke-width=".9" fill="none"/><path d="M11 1Q4 11 11 21M11 1Q18 11 11 21" stroke="#d8e6f6" stroke-width=".9" fill="none"/><path d="M4 7H7V10H4ZM15 7H18V10H15ZM4 12.500H7V15.500H4ZM15 12.500H18V15.500H15ZM8.500 17H13V19.500H8.500Z" fill="#7a7a6a" opacity=".75"/><rect x="13.5" y="13.5" width="10" height="10" rx="1.8" fill="#6aa86a" stroke="#4a8a4a"/><circle cx="17.8" cy="17.8" r="2.3" fill="none" stroke="#fff" stroke-width="1.3"/><path d="M19.500 19.500L22 22" stroke="#fff" stroke-width="1.5"/></svg><svg class="abs" style="left:1134.0px;top:105.0px" width="24" height="24" viewBox="0 0 24 24" ><circle cx="12" cy="10.5" r="10" fill="#8ab0e0" stroke="#3a5a88" stroke-width=".9"/><path d="M12 .5V20.500M2 10.500H22M3.500 5.500H20.500M3.500 15.500H20.5" stroke="#d8e6f6" stroke-width=".7"/><path d="M12 .5Q5 10.500 12 20.500M12 .5Q19 10.500 12 20.5" stroke="#d8e6f6" stroke-width=".7" fill="none"/><path d="M5 6L8 5L9 8L6.500 10L7.500 13L6 14Z M13 5L19 5.500L18.500 9L16 10.500L17 13L14.500 12L13.500 8.500Z" fill="#2a4a7a"/><path d="M1.500 20A4.300 3.600 0 0 1 10.100 20V21A4.300 3 0 0 1 1.500 21Z M13.900 20A4.300 3.600 0 0 1 22.500 20V21A4.300 3 0 0 1 13.900 21Z" fill="#000"/><path d="M3 18.500L6.500 12.500H10.500L11 19H13L13.500 12.500H17.500L21 18.500Z" fill="#000"/><ellipse cx="5.800" cy="21.200" rx="2.600" ry="1.300" fill="#fff"/><ellipse cx="18.200" cy="21.200" rx="2.600" ry="1.300" fill="#fff"/></svg><div class="sep" style="left:1163.5px;top:101.5px;height:30px"></div><div class="hv" style="left:1168px;top:104px;height:26px"></div><div class="hv" style="left:1170px;top:106px;height:26px"></div><svg class="abs" style="left:1179.5px;top:105.0px" width="24" height="24" viewBox="0 0 24 24" ><path d="M11 1.500C7 1.500 7 3 7 5V7.500H12V8.500H4.500C2 8.500 1.500 11 1.500 13C1.500 15 2 17 4.500 17H6.500V14C6.500 12 8 10.500 10 10.500H14.500C16 10.500 17 9.500 17 8V5C17 2.500 15 1.500 11 1.500Z" fill="#3a78b0"/><circle cx="9" cy="4.2" r="1" fill="#fff"/><path d="M13 22.500C17 22.500 17 21 17 19V16.500H12V15.500H19.500C22 15.500 22.500 13 22.500 11C22.500 9 22 7 19.500 7H17.500V10C17.500 12 16 13.500 14 13.500H9.500C8 13.500 7 14.500 7 16V19C7 21.500 9 22.500 13 22.500Z" fill="#f6cf3e"/><path d="M15 18L21.500 20.500L15 23" fill="none" stroke="#5a3a1a" stroke-width="1.3"/></svg><svg class="abs" style="left:1210.6px;top:105.0px" width="24" height="24" viewBox="0 0 24 24" ><text x="1" y="12" font-family="Liberation Sans,sans-serif" font-weight="bold" font-size="10.5" fill="#4a4a4a">KML</text><g transform="translate(13 13)"><rect x="0.5" y="0.5" width="9" height="9" rx="1.8" fill="#74a36f" stroke="#5e8c5a"/><path d="M5 2V8 M2 5H8" stroke="#fff" stroke-width="2.2"/></g></svg><svg class="abs" style="left:1240.5px;top:105.0px" width="24" height="24" viewBox="0 0 24 24" ><text x="-1.5" y="10.5" font-family="Liberation Sans,sans-serif" font-weight="bold" font-size="10.4" fill="#111" textLength="24" lengthAdjust="spacingAndGlyphs">HTML</text><g transform="translate(12.5 13)"><rect x="0.5" y="0.5" width="9.5" height="9.5" rx="1.6" fill="#d0b838" stroke="#b8a028"/><path d="M5.25 2V8.5 M2 5.25H8.5 M2.8 2.8L7.7 7.7 M7.7 2.8L2.8 7.7" stroke="#fff" stroke-width="1.3"/></g></svg><svg class="abs" style="left:1272.0px;top:105.0px" width="24" height="24" viewBox="0 0 24 24" ><rect x="1" y="2" width="19" height="15" rx="6.5" fill="#7a9ad0" stroke="#2a4a7a" stroke-width="1"/><path d="M4 4H8V8H4ZM12 4H16.500V8H12ZM8 8H12V12.500H8ZM4 12.500H8V15.500H4ZM12 12.500H16V15.500H12Z" fill="#1e3a6a"/><g transform="translate(13.5 13.5)"><rect x="0.5" y="0.5" width="9" height="9" rx="1.8" fill="#74a36f" stroke="#5e8c5a"/><path d="M5 2V8 M2 5H8" stroke="#fff" stroke-width="2.2"/></g></svg><svg class="abs" style="left:1303.0px;top:105.0px" width="24" height="24" viewBox="0 0 24 24" ><rect x="1.5" y="1.5" width="4.2" height="4.2" rx=".8" fill="#8ab848"/><rect x="7.1" y="1.5" width="4.2" height="4.2" rx=".8" fill="#8ab0e8"/><rect x="12.7" y="1.5" width="4.2" height="4.2" rx=".8" fill="#f09a50"/><rect x="18.3" y="1.5" width="4.2" height="4.2" rx=".8" fill="#c8a8e8"/><rect x="1.5" y="7.1" width="4.2" height="4.2" rx=".8" fill="#8ab848"/><rect x="7.1" y="7.1" width="4.2" height="4.2" rx=".8" fill="#8ab0e8"/><rect x="12.7" y="7.1" width="4.2" height="4.2" rx=".8" fill="#f09a50"/><rect x="18.3" y="7.1" width="4.2" height="4.2" rx=".8" fill="#c8a8e8"/><rect x="1.5" y="12.7" width="4.2" height="4.2" rx=".8" fill="#f09a50"/><rect x="7.1" y="12.7" width="4.2" height="4.2" rx=".8" fill="#c8a8e8"/><rect x="12.7" y="12.7" width="4.2" height="4.2" rx=".8" fill="#8ab848"/><rect x="18.3" y="12.7" width="4.2" height="4.2" rx=".8" fill="#8ab0e8"/><rect x="1.5" y="18.3" width="4.2" height="4.2" rx=".8" fill="#f09a50"/><rect x="7.1" y="18.3" width="4.2" height="4.2" rx=".8" fill="#c8a8e8"/><rect x="12.7" y="18.3" width="4.2" height="4.2" rx=".8" fill="#8ab848"/><rect x="18.3" y="18.3" width="4.2" height="4.2" rx=".8" fill="#8ab0e8"/></svg><svg class="abs" style="left:1333.0px;top:105.0px" width="24" height="24" viewBox="0 0 24 24" ><rect x="1.5" y="1.5" width="18" height="18" fill="#f8fbff" stroke="#7a9cc8"/><path d="M7.500 1.500V19.500M13.500 1.500V19.500M1.500 7.500H19.500M1.500 13.500H19.5" stroke="#7a9cc8" stroke-width="1.2"/><g transform="translate(13.5 13.5)"><rect x="0.5" y="0.5" width="9.5" height="9.5" rx="1.6" fill="#d8c040" stroke="#bfa828"/><path d="M5.25 2V8.5 M2 5.25H8.5 M2.8 2.8L7.7 7.7 M7.7 2.8L2.8 7.7" stroke="#fff" stroke-width="1.3"/></g></svg><div class="sep" style="left:1363.8px;top:101.5px;height:30px"></div><div class="hv" style="left:1368px;top:104px;height:26px"></div><div class="hv" style="left:1370px;top:106px;height:26px"></div><svg class="abs" style="left:1378.7px;top:105.0px" width="24" height="24" viewBox="0 0 24 24" ><rect x="2.5" y="1.5" width="19" height="21" fill="#5b8cc6" stroke="#2a3a4a"/><rect x="2.5" y="1.5" width="5" height="21" fill="#23303e"/><text x="10" y="17.5" font-family="Liberation Sans,sans-serif" font-size="15" fill="#fff">?</text></svg><div class="sep" style="left:1408px;top:101.5px;height:30px"></div><div class="hv" style="left:1413px;top:104px;height:26px"></div><div class="hv" style="left:1415px;top:106px;height:26px"></div><svg class="abs" style="left:1424.5px;top:105.0px" width="24" height="24" viewBox="0 0 24 24" ><path d="M12 1V23M1 12.500H23" stroke="#3a3a3a" stroke-width="1"/><circle cx="12" cy="12.5" r="4" fill="#f0f0f0" stroke="#a83a3a" stroke-width="1.2" stroke-dasharray="4 2.280"/></svg><div class="hv" style="left:8px;top:138px;height:26px"></div><div class="hv" style="left:10px;top:140px;height:26px"></div><svg class="abs" style="left:19.0px;top:139.0px" width="24" height="24" viewBox="0 0 24 24" ><path d="M2.500 22.500V5L15 22.500Z" fill="#dcd8d4" stroke="#cbc6c2"/><path d="M6 19.500V14L10 19.500Z" fill="#f0f0f0" stroke="#cbc6c2" stroke-width=".7"/><rect x="15.5" y="1.5" width="5" height="21" fill="#dedad6" stroke="#cbc6c2"/><path d="M17.500 4H20.500M17.500 7H20.500M17.500 10H20.500M17.500 13H20.5" stroke="#cbc6c2" stroke-width=".8"/></svg><svg class="abs" style="left:50.3px;top:139.0px" width="24" height="24" viewBox="0 0 24 24" ><path d="M3 7.500C3 2.500 9 2 12.500 4C15 2.500 21 3.500 20.500 8.500C20 13 15 12.500 12.500 11.500C9 14.500 3 13 3 7.500Z" fill="#d6d6d6" stroke="#c6c6c6" stroke-width=".8"/><rect x="13.5" y="13.5" width="9.5" height="9.5" rx="1.6" fill="#cfcfcf" stroke="#c2c2c2"/><path d="M15 18.250H19V16L22 18.250L19 20.500V18.250" fill="#f0f0f0" stroke="#f0f0f0" stroke-width="1.3"/></svg><svg class="abs" style="left:96.5px;top:139.0px" width="24" height="24" viewBox="0 0 24 24" ><path d="M3 7.500C3 2.500 9 2 12.500 4C15 2.500 21 3.500 20.500 8.500C20 13 15 12.500 12.500 11.500C9 14.500 3 13 3 7.500Z" fill="#d6d6d6" stroke="#c6c6c6" stroke-width=".8"/><rect x="13.5" y="13.5" width="9.5" height="9.5" rx="1.6" fill="#cfcfcf" stroke="#c2c2c2"/><path d="M16 19A2.500 2.500 0 1 0 18.500 16.3" fill="none" stroke="#f0f0f0" stroke-width="1.5"/></svg><svg class="abs" style="left:127.6px;top:139.0px" width="24" height="24" viewBox="0 0 24 24" ><circle cx="9" cy="8.5" r="7" fill="#d8d8d8" stroke="#c8c8c8"/><path d="M10 11L17 9L22 14L19.500 21H12L8.500 16Z" fill="#d4d4d4" stroke="#c4c4c4"/><circle cx="15" cy="15" r="1.3" fill="#bdbdbd"/></svg><svg class="abs" style="left:158.7px;top:139.0px" width="24" height="24" viewBox="0 0 24 24" ><path d="M3 7.500C3 2.500 9 2 12.500 4C15 2.500 21 3.500 20.500 8.500C20 13 15 12.500 12.500 11.500C9 14.500 3 13 3 7.500Z" fill="#d6d6d6" stroke="#c6c6c6" stroke-width=".8"/><ellipse cx="9" cy="7" rx="3.5" ry="2" fill="#eaeaea"/><rect x="13.5" y="13.5" width="9.5" height="9.5" rx="1.6" fill="#cfcfcf" stroke="#c2c2c2"/><path d="M18.250 15V21.500M15 18.250H21.500M16 16L20.500 20.500M20.500 16L16 20.5" stroke="#f0f0f0" stroke-width="1.4"/></svg><svg class="abs" style="left:190.0px;top:139.0px" width="24" height="24" viewBox="0 0 24 24" ><path d="M3 7.500C3 2.500 9 2 12.500 4C15 2.500 21 3.500 20.500 8.500C20 13 15 12.500 12.500 11.500C9 14.500 3 13 3 7.500Z" fill="#d6d6d6" stroke="#c6c6c6" stroke-width=".8"/><path d="M2 18C2 14 6 12.500 9.500 14C11 16 9 21.500 5 21.500C3 21.500 2 20 2 18Z" fill="#d6d6d6" stroke="#c6c6c6" stroke-width=".8"/><rect x="13.5" y="13.5" width="9.5" height="9.5" rx="1.6" fill="#cfcfcf" stroke="#c2c2c2"/><path d="M18.250 15V21.500M15 18.250H21.500M16 16L20.500 20.500M20.500 16L16 20.5" stroke="#f0f0f0" stroke-width="1.4"/></svg><svg class="abs" style="left:221.0px;top:139.0px" width="24" height="24" viewBox="0 0 24 24" ><path d="M3 7.500C3 2.500 9 2 12.500 4C15 2.500 21 3.500 20.500 8.500C20 13 15 12.500 12.500 11.500C9 14.500 3 13 3 7.500Z" fill="#d6d6d6" stroke="#c6c6c6" stroke-width=".8"/><ellipse cx="9" cy="7" rx="3.5" ry="2" fill="#cccccc"/><rect x="13.5" y="13.5" width="9.5" height="9.5" rx="1.6" fill="#cfcfcf" stroke="#c2c2c2"/><path d="M18.250 15V21.500M15 18.250H21.500M16 16L20.500 20.500M20.500 16L16 20.5" stroke="#f0f0f0" stroke-width="1.4"/></svg><svg class="abs" style="left:252.0px;top:139.0px" width="24" height="24" viewBox="0 0 24 24" ><path d="M3 7.500C3 2.500 9 2 12.500 4C15 2.500 21 3.500 20.500 8.500C20 13 15 12.500 12.500 11.500C9 14.500 3 13 3 7.500Z" fill="#d6d6d6" stroke="#c6c6c6" stroke-width=".8"/><ellipse cx="9" cy="7" rx="3.5" ry="2" fill="#eaeaea"/><rect x="13.5" y="13.5" width="9.5" height="9.5" rx="1.6" fill="#cfcfcf" stroke="#c2c2c2"/><path d="M15.800 15.800L20.700 20.700M20.700 15.800L15.800 20.7" stroke="#f0f0f0" stroke-width="2.2"/></svg><svg class="abs" style="left:283.4px;top:139.0px" width="24" height="24" viewBox="0 0 24 24" ><path d="M3 7.500C3 2.500 9 2 12.500 4C15 2.500 21 3.500 20.500 8.500C20 13 15 12.500 12.500 11.500C9 14.500 3 13 3 7.500Z" fill="#d6d6d6" stroke="#c6c6c6" stroke-width=".8"/><path d="M2 18C2 14 6 12.500 9.500 14C11 16 9 21.500 5 21.500C3 21.500 2 20 2 18Z" fill="#d6d6d6" stroke="#c6c6c6" stroke-width=".8"/><rect x="13.5" y="13.5" width="9.5" height="9.5" rx="1.6" fill="#cfcfcf" stroke="#c2c2c2"/><path d="M15.800 15.800L20.700 20.700M20.700 15.800L15.800 20.7" stroke="#f0f0f0" stroke-width="2.2"/></svg><svg class="abs" style="left:313.0px;top:139.0px" width="24" height="24" viewBox="0 0 24 24" ><path d="M3 7C3 2.500 9 2 12.500 4C15 2.500 21 3.500 20.500 8C20 11.500 15 11 12.500 10.500C11 12 10 15 9 19.500C7.500 21.500 4.500 20.500 4.500 17.500C4.500 13 3 11 3 7Z" fill="#d4d4d4" stroke="#c6c6c6" stroke-width=".8"/></svg><svg class="abs" style="left:344.5px;top:139.0px" width="24" height="24" viewBox="0 0 24 24" ><path d="M3 15C4 10 10 4 16 3C21 3 22.500 7.500 20 11C16 16 11 21 6.500 21C3.500 21 2.500 18 3 15Z" fill="#d0d0d0" stroke="#c2c2c2" stroke-width=".8"/><path d="M7 14C8 11 12 8 15.500 7.5" fill="none" stroke="#c0c0c0" stroke-width=".9"/></svg><svg class="abs" style="left:375.6px;top:139.0px" width="24" height="24" viewBox="0 0 24 24" ><path d="M3 3L9 19L14.500 4L20 3.5" fill="none" stroke="#cdcdcd" stroke-width="1.2"/><circle cx="3" cy="3" r="1.5" fill="#f0f0f0" stroke="#c8c8c8"/><circle cx="20" cy="3.5" r="1.5" fill="#f0f0f0" stroke="#c8c8c8"/><rect x="13.5" y="13.5" width="9.5" height="9.5" rx="1.6" fill="#cfcfcf" stroke="#c2c2c2"/><circle cx="18.250" cy="18.250" r="2.5" fill="none" stroke="#f0f0f0" stroke-width="1.4"/></svg><svg class="abs" style="left:406.8px;top:139.0px" width="24" height="24" viewBox="0 0 24 24" ><path d="M8 1V23M1 9H15" stroke="#cdcdcd" stroke-width="1.1"/><rect x="12.5" y="2.5" width="5" height="5" fill="#f0f0f0" stroke="#c8c8c8"/><rect x="2.5" y="15.5" width="5" height="5" fill="#f0f0f0" stroke="#c8c8c8"/><path d="M15 8V22" stroke="#cdcdcd" stroke-width="1.1"/></svg><svg class="abs" style="left:436.7px;top:139.0px" width="24" height="24" viewBox="0 0 24 24" ><path d="M2 7C2 3 7 2 11.500 3.500V13C7 14.500 2 12 2 7Z M22 7C22 3 17 2 12.500 3.500V13C17 14.500 22 12 22 7Z" fill="#d4d4d4" stroke="#c4c4c4" stroke-width=".8"/><path d="M10 12L7 22M14 12L17 22" stroke="#c8c8c8" stroke-width="1.3" fill="none"/><circle cx="7" cy="21" r="2" fill="none" stroke="#c6c6c6" stroke-width="1.1"/><circle cx="17" cy="21" r="2" fill="none" stroke="#c6c6c6" stroke-width="1.1"/></svg><svg class="abs" style="left:467.8px;top:139.0px" width="24" height="24" viewBox="0 0 24 24" ><path d="M2 7C2 3 7 2 11.500 3.500V13C7 14.500 2 12 2 7Z M22 7C22 3 17 2 12.500 3.500V13C17 14.500 22 12 22 7Z" fill="#d4d4d4" stroke="#c4c4c4" stroke-width=".8"/><ellipse cx="7" cy="7.5" rx="2.5" ry="1.8" fill="#c8c8c8"/><path d="M10 12L7 22M14 12L17 22" stroke="#c8c8c8" stroke-width="1.3" fill="none"/><circle cx="7" cy="21" r="2" fill="none" stroke="#c6c6c6" stroke-width="1.1"/><circle cx="17" cy="21" r="2" fill="none" stroke="#c6c6c6" stroke-width="1.1"/></svg><svg class="abs" style="left:499.0px;top:139.0px" width="24" height="24" viewBox="0 0 24 24" ><path d="M2 7C2 3 7 2 11.500 3.500V12C7 13.500 2 12 2 7Z M22 7C22 3 17 2 12.500 3.500V12C17 13.500 22 12 22 7Z" fill="#d2d2d2" stroke="#c4c4c4" stroke-width=".8"/><path d="M9 11C9 16 11 20 14 22" fill="none" stroke="#c8c8c8" stroke-width="1.1"/></svg><svg class="abs" style="left:529.0px;top:139.0px" width="24" height="24" viewBox="0 0 24 24" ><path d="M3 3H21M3 7.500H21M3 12H21M3 16.500H21M3 21H21" stroke="#cfcfcf" stroke-width="1"/><path d="M12 2V22" stroke="#c8c8c8" stroke-width="1.2"/><path d="M9 5.500L12 7.500L9 9.500M15 14.500L12 16.500L15 18.5" fill="none" stroke="#c6c6c6" stroke-width="1"/></svg><svg class="abs" style="left:560.0px;top:139.0px" width="24" height="24" viewBox="0 0 24 24" ><path d="M12 3L21 8L12 13Z" fill="#d8d8d8" stroke="#c8c8c8" stroke-width=".8"/><path d="M12 3V21M8 22H17" stroke="#cacaca" stroke-width="1.2"/><path d="M10 5A8 8 0 0 0 5 16" fill="none" stroke="#cacaca" stroke-width="1.3"/><path d="M3 14L5 18L8 15Z" fill="#cacaca"/></svg><svg class="abs" style="left:80.5px;top:149.0px" width="9" height="5" viewBox="0 0 9 5"><path d="M0 0H9L4.5 5Z" fill="#9a9a9a"/></svg><svg class="abs" style="left:592.0px;top:149.0px" width="9" height="5" viewBox="0 0 9 5"><path d="M0 0H9L4.5 5Z" fill="#8a8a8a"/></svg><div class="hv" style="left:8px;top:171.5px;height:26px"></div><div class="hv" style="left:10px;top:173.5px;height:26px"></div><svg class="abs" style="left:18.0px;top:172.5px" width="24" height="24" viewBox="0 0 24 24" ><rect x="1" y="1" width="21" height="21" fill="#d2e8c4"/><path d="M1 6L8 3L14 8L22 5M1 14L9 12L15 17L22 14" stroke="#b4d4a4" stroke-width="2.2" fill="none"/><path d="M6 1L8 9L5 15L9 22" stroke="#c4dcec" stroke-width="1.8" fill="none"/><circle cx="11" cy="11" r="3.5" fill="#bcd8ea" opacity=".8"/><path d="M14 19L21 13.500M15.500 14.500L20.500 20" stroke="#4a8a2a" stroke-width="1.5"/><circle cx="17.5" cy="17" r="3.2" fill="#8ac860" stroke="#4a8a2a" stroke-width=".9"/></svg><svg class="abs" style="left:50.0px;top:172.5px" width="24" height="24" viewBox="0 0 24 24" ><rect x="1" y="2" width="21" height="20" fill="#f0e8c0"/><path d="M1 2H10L6 10L1 12Z" fill="#8acb88"/><path d="M10 2H22V9L14 12Z" fill="#f4c470"/><path d="M1 14L10 12L14 22H1Z" fill="#f6d860"/><path d="M14 13L22 10V22H15Z" fill="#8ab4e0"/><path d="M4 5H8V8H4Z" fill="#4aa84a"/><path d="M20 2L9.500 18" stroke="#6a3a1a" stroke-width="3.4" stroke-linecap="round"/><path d="M9.500 18L7.500 22.500L11.500 20Z" fill="#e8d0a0" stroke="#6a4a2a" stroke-width=".5"/><path d="M19.500 3L21 1" stroke="#d04a4a" stroke-width="3"/></svg><div class="sep" style="left:79px;top:169px;height:30px"></div><div class="hv" style="left:84px;top:171.5px;height:26px"></div><div class="hv" style="left:86px;top:173.5px;height:26px"></div><svg class="abs" style="left:94.7px;top:172.5px" width="24" height="24" viewBox="0 0 24 24" ><path d="M12 3L15 6.8H13V10H11V6.8H9Z" fill="#000"/><rect x="6" y="12" width="12" height="9.5" rx=".8" fill="#000"/><rect x="9.7" y="10.7" width="4.6" height="2" fill="#000"/><circle cx="12" cy="16.700" r="2.900" fill="#000" stroke="#fff" stroke-width="1"/><circle cx="12" cy="16.700" r="1.100" fill="none" stroke="#fff" stroke-width=".8"/></svg><svg class="abs" style="left:124.5px;top:172.5px" width="24" height="24" viewBox="0 0 24 24" ><rect x="2" y="3" width="17.500" height="15" fill="#fff"/><rect x="3.200" y="4.200" width="15.100" height="12.600" fill="none" stroke="#000" stroke-width="2.400" stroke-dasharray="3.2 1.5"/><rect x="5" y="6" width="11.500" height="9" fill="#4a4a4a"/><path d="M5 14L8.500 10L11 12.500L14 8.500L16.500 11.500V15H5Z" fill="#e8e8e8"/><rect x="6" y="7" width="2.500" height="1.500" fill="#fff"/><path transform="translate(14 11) scale(0.95)" d="M0 0L0 10.5L2.6 8.2L4.6 12.6L6.4 11.8L4.4 7.6L7.8 7.4Z" fill="#fff" stroke="#111" stroke-width="0.9" stroke-linejoin="round"/></svg><div class="hh" style="left:9px;top:204.5px;width:30px"></div><div class="hh" style="left:11px;top:206.5px;width:28px"></div><svg class="abs" style="left:9.0px;top:216.3px" width="24" height="24" viewBox="0 0 24 24" ><path d="M3 3.500L9.500 19.500L15 4L20.500 3.5" fill="none" stroke="#2a2a2a" stroke-width="1.4"/><path d="M3 1.800L4.700 3.500L3 5.200L1.300 3.500Z M15 2.300L16.700 4L15 5.700L13.300 4Z M20.500 1.800L22.200 3.500L20.500 5.200L18.800 3.500Z" fill="#fff" stroke="#2a2a2a" stroke-width=".9"/><circle cx="9.5" cy="19.7" r="1.7" fill="#fff" stroke="#2a2a2a" stroke-width="1"/><g transform="translate(13.5 13.5)"><rect x="0.5" y="0.5" width="9" height="9" rx="1.8" fill="#74a36f" stroke="#5e8c5a"/><path d="M5 2V8 M2 5H8" stroke="#fff" stroke-width="2.2"/></g></svg><svg class="abs" style="left:9.0px;top:246.3px" width="24" height="24" viewBox="0 0 24 24" ><rect x="2" y="2" width="18" height="18" fill="#8aa8d4"/><path d="M2 2H8V8H2ZM14 2H20V8H14ZM8 8H14V14H8ZM2 14H8V20H2Z" fill="#1e3a6a"/><path d="M8 2H14V8H8ZM2 8H8V14H2Z" fill="#5b80b8"/><g transform="translate(13.5 13.5)"><rect x="0.5" y="0.5" width="9" height="9" rx="1.8" fill="#74a36f" stroke="#5e8c5a"/><path d="M5 2V8 M2 5H8" stroke="#fff" stroke-width="2.2"/></g></svg><svg class="abs" style="left:9.0px;top:276.3px" width="24" height="24" viewBox="0 0 24 24" ><rect x="2.5" y="2.5" width="19" height="19" fill="#8aa8d4" stroke="#2a4a7a"/><path d="M12 2.500V21.500M2.500 14H21.500M2.500 2.500L12 14M12 2.500L2.500 14M12 14L21.500 2.500M7 14V21.5" stroke="#2a4a7a" stroke-width="1.1" fill="none"/><rect x="3" y="14.5" width="8.5" height="6.5" fill="#4a70a8"/><g transform="translate(13.5 13.5)"><rect x="0.5" y="0.5" width="9" height="9" rx="1.8" fill="#74a36f" stroke="#5e8c5a"/><path d="M5 2V8 M2 5H8" stroke="#fff" stroke-width="2.2"/></g></svg><svg class="abs" style="left:9.0px;top:306.3px" width="24" height="24" viewBox="0 0 24 24" ><path d="M8 2.500C13 1.500 16 4.500 15 9C14 13 10 16 5.500 17L4.500 15.500C8 14 9.500 12 9.500 10C6.500 10.500 4.500 8.500 5 6C5.300 4 6.500 3 8 2.500Z" fill="#3a64a0" stroke="#2a4a7a" stroke-width=".6"/><g transform="translate(13.5 13.5)"><rect x="0.5" y="0.5" width="9" height="9" rx="1.8" fill="#74a36f" stroke="#5e8c5a"/><path d="M5 2V8 M2 5H8" stroke="#fff" stroke-width="2.2"/></g></svg><svg class="abs" style="left:9.0px;top:336.3px" width="24" height="24" viewBox="0 0 24 24" ><path d="M2 22.500C3.500 15 8 7 21.500 1.500C22 6 20 11 13 14.500C10 16 6 17 4.500 19Z" fill="#7fa6d8" stroke="#4a72a8" stroke-width=".9"/><path d="M2.500 22C5 15 11 8 20 3" fill="none" stroke="#3e6498" stroke-width=".9"/><path d="M9 13L17 10M11.500 10L18.500 7" stroke="#a8c4e8" stroke-width=".8"/><g transform="translate(13.5 13.5)"><rect x="0.5" y="0.5" width="9" height="9" rx="1.8" fill="#74a36f" stroke="#5e8c5a"/><path d="M5 2V8 M2 5H8" stroke="#fff" stroke-width="2.2"/></g></svg><svg class="abs" style="left:9.0px;top:366.3px" width="24" height="24" viewBox="0 0 24 24" ><rect x="1.5" y="1.5" width="20" height="20" rx="2" fill="#9ab6da" stroke="#5578a8"/><path d="M4.500 3.500L10 18L15.500 3.500L19.500 3.5" fill="none" stroke="#2e4468" stroke-width="1.3"/><circle cx="10" cy="18.3" r="1.6" fill="#fff" stroke="#2e4468" stroke-width=".9"/><g transform="translate(13.5 13.5)"><rect x="0.5" y="0.5" width="9" height="9" rx="1.8" fill="#74a36f" stroke="#5e8c5a"/><path d="M5 2V8 M2 5H8" stroke="#fff" stroke-width="2.2"/></g></svg><svg class="abs" style="left:9.0px;top:396.3px" width="24" height="24" viewBox="0 0 24 24" ><path d="M3 8C2 3 7 1 11 2C15 0.500 20 3 19 8C18.500 11 17 13 16 14C16 16 15 17.500 13 17.500C11.500 17.500 11 16 11 14C9 14.500 7.500 14 6.500 12.500C4.500 12 3.500 10.500 3 8Z" fill="#4a74b0" stroke="#2a4a7a" stroke-width=".9"/><path d="M11 3V14M14 6C15 6 16 7 16 9" stroke="#c8d8f0" stroke-width="1" fill="none"/><circle cx="7.5" cy="6.5" r=".9" fill="#fff"/><g transform="translate(13.5 13.5)"><rect x="0.5" y="0.5" width="9" height="9" rx="1.8" fill="#74a36f" stroke="#5e8c5a"/><path d="M5 2V8 M2 5H8" stroke="#fff" stroke-width="2.2"/></g></svg><svg class="abs" style="left:9.0px;top:426.3px" width="24" height="24" viewBox="0 0 24 24" ><circle cx="12" cy="10.5" r="10" fill="#8ab0e0" stroke="#3a5a88" stroke-width=".9"/><path d="M12 .5V20.500M2 10.500H22M3.500 5.500H20.500M3.500 15.500H20.5" stroke="#d8e6f6" stroke-width=".7"/><path d="M12 .5Q5 10.500 12 20.500M12 .5Q19 10.500 12 20.5" stroke="#d8e6f6" stroke-width=".7" fill="none"/><path d="M5 6L8 5L9 8L6.500 10L7.500 13L6 14Z M13 5L19 5.500L18.500 9L16 10.500L17 13L14.500 12L13.500 8.500Z" fill="#2a4a7a"/><g transform="translate(13.5 13.5)"><rect x="0.5" y="0.5" width="9" height="9" rx="1.8" fill="#74a36f" stroke="#5e8c5a"/><path d="M5 2V8 M2 5H8" stroke="#fff" stroke-width="2.2"/></g></svg><svg class="abs" style="left:9.0px;top:456.3px" width="24" height="24" viewBox="0 0 24 24" ><circle cx="11.5" cy="11" r="10" fill="#2e568e" stroke="#1e3a6a"/><path d="M2 8H21M2 14H21" stroke="#c8daf0" stroke-width="2.2"/><path d="M11.500 1Q5 11 11.500 21M11.500 1Q18 11 11.500 21M11.500 1V21" fill="none" stroke="#c8daf0" stroke-width="1.3"/><g transform="translate(13.5 13.5)"><rect x="0.5" y="0.5" width="9" height="9" rx="1.8" fill="#74a36f" stroke="#5e8c5a"/><path d="M5 2V8 M2 5H8" stroke="#fff" stroke-width="2.2"/></g></svg><svg class="abs" style="left:9.0px;top:486.3px" width="24" height="24" viewBox="0 0 24 24" ><circle cx="11.5" cy="11" r="10" fill="#eaf0f8" stroke="#5a7aa8"/><path d="M2 7.500H21M2 14.500H21M11.500 1V21M11.500 1Q4 11 11.500 21M11.500 1Q19 11 11.500 21" fill="none" stroke="#7a9ac8" stroke-width=".9"/><path d="M5 6L10 17L14 6L18 6" fill="none" stroke="#222" stroke-width="1.2"/><circle cx="5" cy="6" r="1.3" fill="#fff" stroke="#222" stroke-width=".8"/><circle cx="10" cy="17" r="1.3" fill="#fff" stroke="#222" stroke-width=".8"/><circle cx="14" cy="6" r="1.3" fill="#fff" stroke="#222" stroke-width=".8"/><circle cx="18" cy="6" r="1.3" fill="#fff" stroke="#222" stroke-width=".8"/><g transform="translate(13.5 13.5)"><rect x="0.5" y="0.5" width="9" height="9" rx="1.8" fill="#74a36f" stroke="#5e8c5a"/><path d="M5 2V8 M2 5H8" stroke="#fff" stroke-width="2.2"/></g></svg><svg class="abs" style="left:9.0px;top:516.3px" width="24" height="24" viewBox="0 0 24 24" ><path d="M3 3.500L9.500 19.500L15 4L20.500 3.5" fill="none" stroke="#2a2a2a" stroke-width="1.4"/><path d="M3 1.800L4.700 3.500L3 5.200L1.300 3.500Z M15 2.300L16.700 4L15 5.700L13.300 4Z M20.500 1.800L22.200 3.500L20.500 5.200L18.800 3.500Z" fill="#fff" stroke="#2a2a2a" stroke-width=".9"/><circle cx="9.5" cy="19.7" r="1.7" fill="#fff" stroke="#2a2a2a" stroke-width="1"/><g transform="translate(13.5 13.5)"><rect x="0.5" y="0.5" width="9" height="9" rx="1.6" fill="#e8d84a" stroke="#d0be30"/><path d="M5 2V8 M2 5H8 M2.8 2.8L7.2 7.2 M7.2 2.8L2.8 7.2" stroke="#fff" stroke-width="1.3"/></g></svg><svg class="abs" style="left:9.0px;top:546.3px" width="24" height="24" viewBox="0 0 24 24" ><rect x="2.5" y="2.5" width="18" height="18" fill="#4a70a8" stroke="#2a4a7a"/><path d="M7 7H11V10.500H7ZM12 7H16V10.500H12ZM17 7H20V10.500H17ZM7 11.500H11V15H7ZM12 11.500H16V15H12ZM17 11.500H20V15H17ZM7 16H11V19.500H7ZM12 16H16V19.500H12Z" fill="#e8eef8"/><g transform="translate(13.5 13.5)"><rect x="0.5" y="0.5" width="9" height="9" rx="1.8" fill="#74a36f" stroke="#5e8c5a"/><path d="M5 2V8 M2 5H8" stroke="#fff" stroke-width="2.2"/></g></svg><svg class="abs" style="left:39.5px;top:406.8px" width="9" height="5" viewBox="0 0 9 5"><path d="M0 0H9L4.5 5Z" fill="#000"/></svg><svg class="abs" style="left:39.5px;top:436.8px" width="9" height="5" viewBox="0 0 9 5"><path d="M0 0H9L4.5 5Z" fill="#000"/></svg><svg class="abs" style="left:39.5px;top:496.8px" width="9" height="5" viewBox="0 0 9 5"><path d="M0 0H9L4.5 5Z" fill="#000"/></svg><svg class="abs" style="left:39.5px;top:526.8px" width="9" height="5" viewBox="0 0 9 5"><path d="M0 0H9L4.5 5Z" fill="#000"/></svg><div class="b" style="left:55px;top:203px;width:353px;height:30.5px;background:#d8d8d8;"></div><span class="t" style="left:59.5px;top:210.9px;height:20px;line-height:20px;font-size:15.0px;letter-spacing:-0.005px;color:#000;">Layer</span><svg class="abs" style="left:359px;top:207px" width="46" height="22" viewBox="0 0 46 22" fill="none" stroke="#2a2a2a"><rect x="7.2" y="3" width="10" height="9.5" stroke-width="1.5"/><path d="M6.5 3.6H18" stroke-width="2.6"/><rect x="3" y="8.5" width="10" height="10" fill="#d8d8d8" stroke-width="1.5"/><path d="M2.3 9.4H13.8" stroke-width="2.6"/><path d="M28.3 5.5L41.3 18.5M41.3 5.5L28.3 18.5" stroke-width="2.7"/></svg><svg class="abs" style="left:57.5px;top:240px;overflow:visible" width="18" height="18" viewBox="0 0 18 18"><path d="M1 10L7 5L11 12L5 16Z" fill="#e8405a"/><path d="M4 13L9 9L12 14L7 17Z" fill="#f0a020"/><path d="M8 12L16 2.5" stroke="#d8a838" stroke-width="2.6" stroke-linecap="round"/><path d="M6 9.500L11 13.5" stroke="#7a5a2a" stroke-width="2"/></svg><svg class="abs" style="left:80.7px;top:240px;overflow:visible" width="18" height="18" viewBox="0 0 18 18"><g transform="translate(-1.3 -1.6) scale(1.2)"><path d="M1.500 8.500V16.500H9.5" fill="none" stroke="#b0b0b0"/><path d="M3.500 6.500V14.500H12" fill="none" stroke="#a0a0a0"/><path d="M5.500 3.500H8V2Q9.500 .5 11 2V3.500H14.500V12.500H5.500Z" fill="#f6f6f6" stroke="#7c7c7c"/><path d="M8.500 4.500V9.500Q9.500 10.800 10.500 9.500V4.5" fill="none" stroke="#7c7c7c" stroke-width=".9"/></g><circle cx="14" cy="14.5" r="2.8" fill="#6ab06a" stroke="#fff" stroke-width=".8"/></svg><svg class="abs" style="left:104px;top:240px;overflow:visible" width="18" height="18" viewBox="0 0 18 18"><path d="M1 8.500Q8 1.500 16 8.500Q8 14.500 1 8.500Z" fill="#f4f4f4" stroke="#8a8a8a" stroke-width=".9"/><circle cx="8.5" cy="8" r="3" fill="#4a6aa8"/><circle cx="8.5" cy="8" r="1.3" fill="#1a2a4a"/><path d="M9 13H17L13 17Z" fill="#0"/></svg><svg class="abs" style="left:126.5px;top:240px;overflow:visible" width="18" height="18" viewBox="0 0 18 18"><path d="M1.500 2.500H16.500L10.500 9.500V16.500L7.500 15V9.500Z" fill="#5b94d2" stroke="#3a74b4" stroke-width=".8"/><path d="M1.500 2.500H16.500L15.300 4H2.700Z" fill="#f0d040"/></svg><svg class="abs" style="left:150px;top:240px;overflow:visible" width="18" height="18" viewBox="0 0 18 18"><text x="1" y="12" font-family="Liberation Serif,serif" font-size="15" fill="#8a1a8a">ε</text><path d="M9.500 11H16.500L14.500 13.500V17L11.500 16V13.500Z" fill="#c8c8c8" stroke="#9a9a9a" stroke-width=".6"/></svg><svg class="abs" style="left:189px;top:240px;overflow:visible" width="18" height="18" viewBox="0 0 18 18"><path d="M3.500 2V15" stroke="#9a9a9a" fill="none"/><rect x="2" y="5" width="3.5" height="3.5" fill="#f0b050" stroke="#d08a2a" stroke-width=".6"/><rect x="2" y="11.5" width="3.5" height="3.5" fill="#f0b050" stroke="#d08a2a" stroke-width=".6"/><rect x="1.5" y="1.5" width="4" height="2" fill="#c8c8c8"/><path d="M9.500 1.500H13.500V9.500H16.500L11.500 16L6.500 9.500H9.500Z" fill="#4f8fd0" stroke="#3a74b4" stroke-width=".7"/></svg><svg class="abs" style="left:211px;top:240px;overflow:visible" width="18" height="18" viewBox="0 0 18 18"><path d="M3.500 5V16" stroke="#9a9a9a" fill="none"/><rect x="2" y="6.5" width="3.5" height="3.5" fill="#f0b050" stroke="#d08a2a" stroke-width=".6"/><rect x="2" y="12.5" width="3.5" height="3.5" fill="#f0b050" stroke="#d08a2a" stroke-width=".6"/><rect x="1.5" y="3" width="4" height="2" fill="#c8c8c8"/><path d="M9.500 16.500H13.500V8.500H16.500L11.500 2L6.500 8.500H9.500Z" fill="#4f8fd0" stroke="#3a74b4" stroke-width=".7"/></svg><svg class="abs" style="left:234px;top:240px;overflow:visible" width="18" height="18" viewBox="0 0 18 18"><rect x="2.5" y="2.5" width="12" height="11" fill="#fafafa" stroke="#9a9a9a"/><rect x="10.5" y="11.5" width="6.5" height="5" rx="1.5" fill="#e05a5a" stroke="#c03a3a" stroke-width=".6"/><path d="M12 14H15.5" stroke="#fff" stroke-width="1.2"/></svg><svg class="abs" style="left:173.5px;top:247.5px" width="9" height="5" viewBox="0 0 9 5"><path d="M0 0H9L4.5 5Z" fill="#000"/></svg><div class="b" style="left:54px;top:262px;width:354px;height:735.5px;background:#fff;border:1px solid #7b7b7b"></div><div class="abs" style="left:402px;top:266px;width:4px;height:545px;background:repeating-linear-gradient(180deg,#ececec 0 21px,#fff 21px 24px)"></div><div class="b" style="left:130px;top:431.5px;width:277px;height:24px;background:#cce8ff;"></div><div class="b" style="left:153.5px;top:431.5px;width:253.5px;height:24px;background:transparent;border:1px dotted #555"></div><div class="b" style="left:80px;top:623.5px;width:326px;height:24px;background:#e5f3ff;"></div><svg class="abs" style="left:60px;top:271.5px" width="12" height="8" viewBox="0 0 12 8"><path d="M1 1.2L6 6.2L11 1.2" fill="none" stroke="#222" stroke-width="1.6"/></svg><div class="cb" style="left:83px;top:267.5px"><svg width="14" height="14" viewBox="0 0 14 14"><path d="M2.2 7.2L5.6 10.6L12 3.4" fill="none" stroke="#111" stroke-width="1.3"/></svg></div><svg class="abs" style="left:106px;top:266.5px;overflow:visible" width="18" height="18" viewBox="0 0 18 18"><g transform="translate(-1.3 -1.6) scale(1.2)"><path d="M1.500 8.500V16.500H9.5" fill="none" stroke="#b0b0b0"/><path d="M3.500 6.500V14.500H12" fill="none" stroke="#a0a0a0"/><path d="M5.500 3.500H8V2Q9.500 .5 11 2V3.500H14.500V12.500H5.500Z" fill="#f6f6f6" stroke="#7c7c7c"/><path d="M8.500 4.500V9.500Q9.500 10.800 10.500 9.500V4.5" fill="none" stroke="#7c7c7c" stroke-width=".9"/></g></svg><svg class="abs" style="left:88px;top:293.5px" width="8" height="12" viewBox="0 0 8 12"><path d="M1.6 1L6.4 6L1.6 11" fill="none" stroke="#a2a2a2" stroke-width="1.9"/></svg><div class="cb" style="left:108px;top:291.5px"><svg width="14" height="14" viewBox="0 0 14 14"><path d="M2.2 7.2L5.6 10.6L12 3.4" fill="none" stroke="#111" stroke-width="1.3"/></svg></div><svg class="abs" style="left:131px;top:290.5px;overflow:visible" width="18" height="18" viewBox="0 0 18 18"><g transform="translate(-1.3 -1.6) scale(1.2)"><path d="M1.500 8.500V16.500H9.5" fill="none" stroke="#b0b0b0"/><path d="M3.500 6.500V14.500H12" fill="none" stroke="#a0a0a0"/><path d="M5.500 3.500H8V2Q9.500 .5 11 2V3.500H14.500V12.500H5.500Z" fill="#f6f6f6" stroke="#7c7c7c"/><path d="M8.500 4.500V9.500Q9.500 10.800 10.500 9.500V4.5" fill="none" stroke="#7c7c7c" stroke-width=".9"/></g></svg><svg class="abs" style="left:86px;top:319.5px" width="12" height="8" viewBox="0 0 12 8"><path d="M1 1.2L6 6.2L11 1.2" fill="none" stroke="#222" stroke-width="1.6"/></svg><div class="cb" style="left:108px;top:315.5px"><svg width="14" height="14" viewBox="0 0 14 14"><path d="M2.2 7.2L5.6 10.6L12 3.4" fill="none" stroke="#111" stroke-width="1.3"/></svg></div><svg class="abs" style="left:131px;top:314.5px;overflow:visible" width="18" height="18" viewBox="0 0 18 18"><g transform="translate(-1.3 -1.6) scale(1.2)"><path d="M1.500 8.500V16.500H9.5" fill="none" stroke="#b0b0b0"/><path d="M3.500 6.500V14.500H12" fill="none" stroke="#a0a0a0"/><path d="M5.500 3.500H8V2Q9.500 .5 11 2V3.500H14.500V12.500H5.500Z" fill="#f6f6f6" stroke="#7c7c7c"/><path d="M8.500 4.500V9.500Q9.500 10.800 10.500 9.500V4.5" fill="none" stroke="#7c7c7c" stroke-width=".9"/></g></svg><div class="cb" style="left:133px;top:339.5px"><svg width="14" height="14" viewBox="0 0 14 14"><path d="M2.2 7.2L5.6 10.6L12 3.4" fill="none" stroke="#111" stroke-width="1.3"/></svg></div><svg class="abs" style="left:154.5px;top:338.5px;overflow:visible" width="20" height="18" viewBox="0 0 20 18"><path d="M1 9H19" stroke="#e8a02a" stroke-width="2.6"/></svg><svg class="abs" style="left:86px;top:367.5px" width="12" height="8" viewBox="0 0 12 8"><path d="M1 1.2L6 6.2L11 1.2" fill="none" stroke="#222" stroke-width="1.6"/></svg><div class="cb" style="left:108px;top:363.5px"><svg width="14" height="14" viewBox="0 0 14 14"><path d="M2.2 7.2L5.6 10.6L12 3.4" fill="none" stroke="#111" stroke-width="1.3"/></svg></div><svg class="abs" style="left:131px;top:362.5px;overflow:visible" width="18" height="18" viewBox="0 0 18 18"><g transform="translate(-1.3 -1.6) scale(1.2)"><path d="M1.500 8.500V16.500H9.5" fill="none" stroke="#b0b0b0"/><path d="M3.500 6.500V14.500H12" fill="none" stroke="#a0a0a0"/><path d="M5.500 3.500H8V2Q9.500 .5 11 2V3.500H14.500V12.500H5.500Z" fill="#f6f6f6" stroke="#7c7c7c"/><path d="M8.500 4.500V9.500Q9.500 10.800 10.500 9.500V4.5" fill="none" stroke="#7c7c7c" stroke-width=".9"/></g></svg><div class="cb" style="left:133px;top:387.5px"><svg width="14" height="14" viewBox="0 0 14 14"><path d="M2.2 7.2L5.6 10.6L12 3.4" fill="none" stroke="#111" stroke-width="1.3"/></svg></div><svg class="abs" style="left:154.5px;top:386.5px;overflow:visible" width="20" height="18" viewBox="0 0 20 18"><path d="M1 9H19" stroke="#f4e82c" stroke-width="5.5"/></svg><svg class="abs" style="left:86px;top:415.5px" width="12" height="8" viewBox="0 0 12 8"><path d="M1 1.2L6 6.2L11 1.2" fill="none" stroke="#222" stroke-width="1.6"/></svg><div class="cb" style="left:108px;top:411.5px"><svg width="14" height="14" viewBox="0 0 14 14"><path d="M2.2 7.2L5.6 10.6L12 3.4" fill="none" stroke="#111" stroke-width="1.3"/></svg></div><svg class="abs" style="left:131px;top:410.5px;overflow:visible" width="18" height="18" viewBox="0 0 18 18"><g transform="translate(-1.3 -1.6) scale(1.2)"><path d="M1.500 8.500V16.500H9.5" fill="none" stroke="#b0b0b0"/><path d="M3.500 6.500V14.500H12" fill="none" stroke="#a0a0a0"/><path d="M5.500 3.500H8V2Q9.500 .5 11 2V3.500H14.500V12.500H5.500Z" fill="#f6f6f6" stroke="#7c7c7c"/><path d="M8.500 4.500V9.500Q9.500 10.800 10.500 9.500V4.5" fill="none" stroke="#7c7c7c" stroke-width=".9"/></g></svg><div class="cb" style="left:133px;top:435.5px"><svg width="14" height="14" viewBox="0 0 14 14"><path d="M2.2 7.2L5.6 10.6L12 3.4" fill="none" stroke="#111" stroke-width="1.3"/></svg></div><svg class="abs" style="left:154.5px;top:434.5px;overflow:visible" width="20" height="18" viewBox="0 0 20 18"><rect x="1" y="1" width="18" height="16" fill="#fff" stroke="#b82a4a" stroke-width="1.3"/><path d="M7 1V17M13 1V17" stroke="#c83a5a" stroke-width="1"/></svg><div class="cb" style="left:133px;top:459.5px"><svg width="14" height="14" viewBox="0 0 14 14"><path d="M2.2 7.2L5.6 10.6L12 3.4" fill="none" stroke="#111" stroke-width="1.3"/></svg></div><svg class="abs" style="left:154.5px;top:458.5px;overflow:visible" width="20" height="18" viewBox="0 0 20 18"><path d="M1 9H19" stroke="#cc2f33" stroke-width="3.2"/></svg><svg class="abs" style="left:62px;top:485.5px" width="8" height="12" viewBox="0 0 8 12"><path d="M1.6 1L6.4 6L1.6 11" fill="none" stroke="#a2a2a2" stroke-width="1.9"/></svg><div class="cb" style="left:83px;top:483.5px"></div><svg class="abs" style="left:106px;top:482.5px;overflow:visible" width="18" height="18" viewBox="0 0 18 18"><rect x="1.5" y="1.5" width="15" height="15" fill="#9ab4dc"/><path d="M1.500 1.500H6.500V6.500H1.500ZM11.500 1.500H16.500V6.500H11.500ZM6.500 6.500H11.500V11.500H6.500ZM1.500 11.500H6.500V16.500H1.500Z" fill="#1e3a64"/><path d="M6.500 1.500H11.500V6.500H6.500ZM11.500 11.500H16.500V16.500H11.500Z" fill="#5a7eb4"/></svg><svg class="abs" style="left:62px;top:509.5px" width="8" height="12" viewBox="0 0 8 12"><path d="M1.6 1L6.4 6L1.6 11" fill="none" stroke="#a2a2a2" stroke-width="1.9"/></svg><div class="cb" style="left:83px;top:507.5px"><svg width="14" height="14" viewBox="0 0 14 14"><path d="M2.2 7.2L5.6 10.6L12 3.4" fill="none" stroke="#111" stroke-width="1.3"/></svg></div><svg class="abs" style="left:106px;top:506.5px;overflow:visible" width="18" height="18" viewBox="0 0 18 18"><rect x="1.5" y="1.5" width="15" height="15" fill="#9ab4dc"/><path d="M1.500 1.500H6.500V6.500H1.500ZM11.500 1.500H16.500V6.500H11.500ZM6.500 6.500H11.500V11.500H6.500ZM1.500 11.500H6.500V16.500H1.500Z" fill="#1e3a64"/><path d="M6.500 1.500H11.500V6.500H6.500ZM11.500 11.500H16.500V16.500H11.500Z" fill="#5a7eb4"/></svg><svg class="abs" style="left:62px;top:533.5px" width="8" height="12" viewBox="0 0 8 12"><path d="M1.6 1L6.4 6L1.6 11" fill="none" stroke="#a2a2a2" stroke-width="1.9"/></svg><div class="cb" style="left:83px;top:531.5px"><svg width="14" height="14" viewBox="0 0 14 14"><path d="M2.2 7.2L5.6 10.6L12 3.4" fill="none" stroke="#111" stroke-width="1.3"/></svg></div><svg class="abs" style="left:106px;top:530.5px;overflow:visible" width="18" height="18" viewBox="0 0 18 18"><rect x="1.5" y="1.5" width="15" height="15" fill="#9ab4dc"/><path d="M1.500 1.500H6.500V6.500H1.500ZM11.500 1.500H16.500V6.500H11.500ZM6.500 6.500H11.500V11.500H6.500ZM1.500 11.500H6.500V16.500H1.500Z" fill="#1e3a64"/><path d="M6.500 1.500H11.500V6.500H6.500ZM11.500 11.500H16.500V16.500H11.500Z" fill="#5a7eb4"/></svg><div class="cb" style="left:83px;top:555.5px"><svg width="14" height="14" viewBox="0 0 14 14"><path d="M2.2 7.2L5.6 10.6L12 3.4" fill="none" stroke="#111" stroke-width="1.3"/></svg></div><svg class="abs" style="left:106px;top:554.5px;overflow:visible" width="18" height="18" viewBox="0 0 18 18"><rect x="1.5" y="1.5" width="15" height="15" fill="#9ab4dc"/><path d="M1.500 1.500H6.500V6.500H1.500ZM11.500 1.500H16.500V6.500H11.500ZM6.500 6.500H11.500V11.500H6.500ZM1.500 11.500H6.500V16.500H1.500Z" fill="#1e3a64"/><path d="M6.500 1.500H11.500V6.500H6.500ZM11.500 11.500H16.500V16.500H11.500Z" fill="#5a7eb4"/></svg><div class="cb" style="left:83px;top:579.5px"></div><svg class="abs" style="left:106px;top:578.5px;overflow:visible" width="18" height="18" viewBox="0 0 18 18"><circle cx="9" cy="9" r="4.3" fill="#e79a2e" stroke="#8a5a1a" stroke-width=".7"/></svg><div class="cb" style="left:83px;top:603.5px"></div><svg class="abs" style="left:106px;top:602.5px;overflow:visible" width="18" height="18" viewBox="0 0 18 18"><circle cx="9" cy="9" r="4.3" fill="#a85252" stroke="#6a3030" stroke-width=".7"/></svg><div class="cb" style="left:83px;top:627.5px"></div><svg class="abs" style="left:106px;top:626.5px;overflow:visible" width="18" height="18" viewBox="0 0 18 18"><circle cx="9" cy="9" r="7.3" fill="#fff" stroke="#222" stroke-width="1.1"/><circle cx="9" cy="9" r="2.2" fill="#111"/></svg><svg class="abs" style="left:62px;top:653.5px" width="8" height="12" viewBox="0 0 8 12"><path d="M1.6 1L6.4 6L1.6 11" fill="none" stroke="#a2a2a2" stroke-width="1.9"/></svg><div class="cb" style="left:83px;top:651.5px"></div><svg class="abs" style="left:106px;top:650.5px;overflow:visible" width="18" height="18" viewBox="0 0 18 18"><g transform="translate(-1.3 -1.6) scale(1.2)"><path d="M1.500 8.500V16.500H9.5" fill="none" stroke="#b0b0b0"/><path d="M3.500 6.500V14.500H12" fill="none" stroke="#a0a0a0"/><path d="M5.500 3.500H8V2Q9.500 .5 11 2V3.500H14.500V12.500H5.500Z" fill="#f6f6f6" stroke="#7c7c7c"/><path d="M8.500 4.500V9.500Q9.500 10.800 10.500 9.500V4.5" fill="none" stroke="#7c7c7c" stroke-width=".9"/></g></svg><svg class="abs" style="left:62px;top:677.5px" width="8" height="12" viewBox="0 0 8 12"><path d="M1.6 1L6.4 6L1.6 11" fill="none" stroke="#a2a2a2" stroke-width="1.9"/></svg><div class="cb" style="left:83px;top:675.5px"></div><svg class="abs" style="left:106px;top:674.5px;overflow:visible" width="18" height="18" viewBox="0 0 18 18"><g transform="translate(-1.3 -1.6) scale(1.2)"><path d="M1.500 8.500V16.500H9.5" fill="none" stroke="#b0b0b0"/><path d="M3.500 6.500V14.500H12" fill="none" stroke="#a0a0a0"/><path d="M5.500 3.500H8V2Q9.500 .5 11 2V3.500H14.500V12.500H5.500Z" fill="#f6f6f6" stroke="#7c7c7c"/><path d="M8.500 4.500V9.500Q9.500 10.800 10.500 9.500V4.5" fill="none" stroke="#7c7c7c" stroke-width=".9"/></g></svg><svg class="abs" style="left:62px;top:701.5px" width="8" height="12" viewBox="0 0 8 12"><path d="M1.6 1L6.4 6L1.6 11" fill="none" stroke="#a2a2a2" stroke-width="1.9"/></svg><div class="cb" style="left:83px;top:699.5px"></div><svg class="abs" style="left:106px;top:698.5px;overflow:visible" width="18" height="18" viewBox="0 0 18 18"><path transform="translate(-1.300 -1) scale(1.150)" d="M1.500 6C1.500 1.500 6 3 9 4C12 5 16.500 1.500 16.500 6V11C16.500 15 12 13 9 12.500C6 12 1.500 16 1.500 11Z" fill="#d2d2d2" stroke="#8a8a8a" stroke-width=".9"/></svg><svg class="abs" style="left:62px;top:725.5px" width="8" height="12" viewBox="0 0 8 12"><path d="M1.6 1L6.4 6L1.6 11" fill="none" stroke="#a2a2a2" stroke-width="1.9"/></svg><div class="cb" style="left:83px;top:723.5px"></div><svg class="abs" style="left:106px;top:722.5px;overflow:visible" width="18" height="18" viewBox="0 0 18 18"><g transform="translate(-1.3 -1.6) scale(1.2)"><path d="M1.500 8.500V16.500H9.5" fill="none" stroke="#b0b0b0"/><path d="M3.500 6.500V14.500H12" fill="none" stroke="#a0a0a0"/><path d="M5.500 3.500H8V2Q9.500 .5 11 2V3.500H14.500V12.500H5.500Z" fill="#f6f6f6" stroke="#7c7c7c"/><path d="M8.500 4.500V9.500Q9.500 10.800 10.500 9.500V4.5" fill="none" stroke="#7c7c7c" stroke-width=".9"/></g></svg><svg class="abs" style="left:60px;top:751.5px" width="12" height="8" viewBox="0 0 12 8"><path d="M1 1.2L6 6.2L11 1.2" fill="none" stroke="#222" stroke-width="1.6"/></svg><div class="cb" style="left:83px;top:747.5px"></div><svg class="abs" style="left:106px;top:746.5px;overflow:visible" width="18" height="18" viewBox="0 0 18 18"><rect x="1.5" y="1.5" width="15" height="15" fill="#9ab4dc"/><path d="M1.500 1.500H6.500V6.500H1.500ZM11.500 1.500H16.500V6.500H11.500ZM6.500 6.500H11.500V11.500H6.500ZM1.500 11.500H6.500V16.500H1.500Z" fill="#1e3a64"/><path d="M6.500 1.500H11.500V6.500H6.500ZM11.500 11.500H16.500V16.500H11.500Z" fill="#5a7eb4"/></svg><svg class="abs" style="left:62px;top:773.5px" width="8" height="12" viewBox="0 0 8 12"><path d="M1.6 1L6.4 6L1.6 11" fill="none" stroke="#a2a2a2" stroke-width="1.9"/></svg><div class="cb" style="left:83px;top:771.5px"></div><svg class="abs" style="left:106px;top:770.5px;overflow:visible" width="18" height="18" viewBox="0 0 18 18"><rect x="1.5" y="1.5" width="15" height="15" fill="#9ab4dc"/><path d="M1.500 1.500H6.500V6.500H1.500ZM11.500 1.500H16.500V6.500H11.500ZM6.500 6.500H11.500V11.500H6.500ZM1.500 11.500H6.500V16.500H1.500Z" fill="#1e3a64"/><path d="M6.500 1.500H11.500V6.500H6.500ZM11.500 11.500H16.500V16.500H11.500Z" fill="#5a7eb4"/></svg><svg class="abs" style="left:62px;top:797.5px" width="8" height="12" viewBox="0 0 8 12"><path d="M1.6 1L6.4 6L1.6 11" fill="none" stroke="#a2a2a2" stroke-width="1.9"/></svg><div class="cb" style="left:83px;top:795.5px"></div><svg class="abs" style="left:106px;top:794.5px;overflow:visible" width="18" height="18" viewBox="0 0 18 18"><rect x="1.5" y="1.5" width="15" height="15" fill="#9ab4dc"/><path d="M1.500 1.500H6.500V6.500H1.500ZM11.500 1.500H16.500V6.500H11.500ZM6.500 6.500H11.500V11.500H6.500ZM1.500 11.500H6.500V16.500H1.500Z" fill="#1e3a64"/><path d="M6.500 1.500H11.500V6.500H6.500ZM11.500 11.500H16.500V16.500H11.500Z" fill="#5a7eb4"/></svg><div class="abs" style="left:56px;top:263px;width:346px;height:712px;overflow:hidden"><span class="t" style="left:75.5px;top:2.7px;height:20px;line-height:20px;font-size:14.6px;letter-spacing:-0.260px;color:#000;">Gebiet_und_Wege</span><span class="t" style="left:100.3px;top:26.7px;height:20px;line-height:20px;font-size:14.6px;letter-spacing:-0.500px;color:#000;">Strasse</span><span class="t" style="left:100.3px;top:50.7px;height:20px;line-height:20px;font-size:14.6px;letter-spacing:0.045px;color:#000;">Rundweg</span><span class="t" style="left:124.4px;top:74.7px;height:20px;line-height:20px;font-size:14.6px;letter-spacing:-0.055px;color:#000;font-weight:bold;">Rundweg tracks</span><span class="t" style="left:100.3px;top:98.7px;height:20px;line-height:20px;font-size:14.6px;letter-spacing:-0.717px;color:#000;">NSG_1983</span><span class="t" style="left:124.4px;top:122.7px;height:20px;line-height:20px;font-size:14.6px;letter-spacing:-0.170px;color:#000;font-weight:bold;">nsg_1983_umriss</span><span class="t" style="left:100.3px;top:146.7px;height:20px;line-height:20px;font-size:14.6px;letter-spacing:-0.011px;color:#000;">NSG_1937 = Alter Bannwald</span><span class="t" style="left:124.4px;top:170.7px;height:20px;line-height:20px;font-size:14.6px;letter-spacing:-0.125px;color:#000;font-weight:bold;text-decoration:underline;">nsg_1937_flaeche</span><span class="t" style="left:124.4px;top:194.7px;height:20px;line-height:20px;font-size:14.6px;letter-spacing:-0.170px;color:#000;font-weight:bold;">nsg_1937_umriss</span><span class="t" style="left:75.5px;top:218.7px;height:20px;line-height:20px;font-size:14.6px;letter-spacing:0.170px;color:#7f7f7f;font-weight:bold;font-style:italic;">WT_DGM1_668m</span><span class="t" style="left:75.5px;top:242.7px;height:20px;line-height:20px;font-size:14.6px;letter-spacing:0.093px;color:#000;font-weight:bold;">WT_DGM1_668_5m</span><span class="t" style="left:75.5px;top:266.7px;height:20px;line-height:20px;font-size:14.6px;letter-spacing:0.253px;color:#000;font-weight:bold;">WT_DGM1_669m</span><span class="t" style="left:75.5px;top:290.7px;height:20px;line-height:20px;font-size:14.6px;letter-spacing:0.008px;color:#000;font-weight:bold;">WT_DGM1_rast</span><span class="t" style="left:75.5px;top:314.7px;height:20px;line-height:20px;font-size:14.6px;letter-spacing:-0.083px;color:#7f7f7f;font-weight:bold;font-style:italic;">WT_DGM1_gpkg</span><span class="t" style="left:75.5px;top:338.7px;height:20px;line-height:20px;font-size:14.6px;letter-spacing:-0.151px;color:#7f7f7f;font-weight:bold;font-style:italic;">WT_DGM1_xyz</span><span class="t" style="left:75.5px;top:362.7px;height:20px;line-height:20px;font-size:14.6px;letter-spacing:0.010px;color:#7f7f7f;font-weight:bold;font-style:italic;">Funde_WT_2017_2019</span><span class="t" style="left:75.5px;top:386.7px;height:20px;line-height:20px;font-size:14.6px;letter-spacing:-0.066px;color:#000;">Pflanzengesellschaften</span><span class="t" style="left:75.5px;top:410.7px;height:20px;line-height:20px;font-size:14.6px;letter-spacing:0.426px;color:#000;">Biotope</span><span class="t" style="left:75.5px;top:434.7px;height:20px;line-height:20px;font-size:14.6px;letter-spacing:0.138px;color:#7f7f7f;font-weight:bold;font-style:italic;">Bodenarten</span><span class="t" style="left:75.5px;top:458.7px;height:20px;line-height:20px;font-size:14.6px;letter-spacing:0.125px;color:#000;">Baumfreie_offene_Moorbereiche</span><span class="t" style="left:75.5px;top:482.7px;height:20px;line-height:20px;font-size:14.6px;letter-spacing:0.126px;color:#7f7f7f;font-weight:bold;font-style:italic;">OpenStreetMap Standard</span><span class="t" style="left:75.5px;top:506.7px;height:20px;line-height:20px;font-size:14.6px;letter-spacing:-0.064px;color:#7f7f7f;font-weight:bold;font-style:italic;">WMS LGRB-BW BK50: Bodenkarte 1 : 5</span><span class="t" style="left:75.5px;top:530.7px;height:20px;line-height:20px;font-size:14.6px;letter-spacing:0.008px;color:#7f7f7f;font-weight:bold;font-style:italic;">WMS LGRB-BW GK50: Geologische Ka</span></div><div class="b" style="left:66px;top:497px;width:214.5px;height:36.5px;background:transparent;border:3px solid #c4201e"></div><div class="b" style="left:56px;top:977px;width:351px;height:19px;background:#f0f0f0;"></div><div class="b" style="left:76px;top:977px;width:216px;height:19px;background:#cdcdcd;"></div><svg class="abs" style="left:56px;top:977px" width="351" height="19" viewBox="0 0 351 19" fill="none" stroke="#3c3c3c" stroke-width="1.8"><path d="M12 5L7.5 9.5L12 14"/><path d="M338 5L342.5 9.5L338 14"/></svg><div class="b" style="left:413px;top:201.5px;width:1309px;height:796px;background:#fff;border:1px solid #8c8c8c"></div><div class="abs" style="left:414px;top:203px;width:1307px;height:793px;overflow:hidden"><svg id="map" width="1307" height="793" viewBox="414 203 1307 793" shape-rendering="auto">
<defs><clipPath id="rp"><polygon points="647.7,802.6 700.0,754.0 774.0,680.0 887.0,566.4 938.0,596.0 1159.0,509.0 1187.0,598.0 1180.0,697.0 1172.0,762.0 1111.0,782.6 1000.0,789.0 955.0,792.5 863.0,813.0 733.0,827.0 656.6,828.0"/></clipPath>
<linearGradient id="og" gradientUnits="userSpaceOnUse" x1="780" y1="800" x2="1360" y2="420"><stop offset="0" stop-color="#e9a423"/><stop offset="1" stop-color="#e79a3c"/></linearGradient></defs>
<rect x="414" y="203" width="1307" height="793" fill="#fff"/>
<polygon fill="#000" shape-rendering="crispEdges" points="502.0,461.0 505.4,458.9 509.3,457.5 512.7,455.3 515.9,452.9 519.5,451.0 522.8,448.7 526.8,447.6 530.1,445.4 534.0,444.0 537.5,442.1 541.5,441.1 544.7,438.5 547.7,435.5 551.5,434.2 555.0,432.1 558.8,430.7 562.3,428.8 565.6,426.3 569.5,425.0 572.8,422.8 576.4,421.0 580.2,419.5 583.4,417.0 587.1,415.4 590.7,413.7 594.7,412.6 597.7,409.5 601.1,407.4 604.5,405.3 608.5,404.2 612.1,402.4 615.5,400.3 619.0,398.3 622.7,396.7 626.1,394.4 629.4,392.0 633.2,390.8 636.9,389.0 640.2,386.7 643.5,384.4 647.0,382.3 650.6,380.6 654.2,378.8 657.9,377.2 661.3,374.9 665.1,373.5 668.8,371.9 672.0,369.4 675.6,367.6 679.5,366.4 682.6,363.6 686.2,361.8 689.9,360.3 693.1,357.7 696.9,356.2 700.8,354.9 704.1,352.6 707.8,351.0 711.4,349.2 714.9,347.2 718.2,344.8 721.5,342.6 724.8,340.2 728.7,338.9 732.2,337.0 735.7,334.9 739.3,333.1 742.8,331.1 746.7,329.9 750.0,327.6 753.6,325.8 757.4,324.4 760.7,322.1 763.8,319.3 767.8,318.2 771.6,316.8 774.7,314.0 778.5,312.6 782.1,310.8 785.6,308.8 789.3,307.3 792.5,304.7 796.0,302.7 799.8,301.2 803.2,299.1 807.0,297.7 810.6,295.9 814.1,293.9 817.3,291.4 820.9,289.5 824.3,287.4 828.0,285.7 831.9,284.6 835.5,282.6 839.0,280.7 842.1,278.1 845.7,276.1 849.5,274.7 853.1,273.0 856.6,270.9 859.8,268.4 863.8,267.4 867.2,265.3 870.5,262.8 874.1,261.1 878.0,259.8 881.2,257.3 885.0,255.8 888.2,253.2 892.1,252.2 895.3,249.5 899.3,248.4 902.5,245.9 905.7,243.3 909.9,242.7 913.2,240.3 916.7,238.3 920.5,236.9 923.7,234.3 927.2,232.4 930.8,230.6 934.2,228.5 938.0,227.0 941.8,228.3 945.5,230.0 949.4,231.2 953.1,232.7 956.9,234.2 960.7,235.5 964.7,236.5 968.4,238.1 971.9,240.2 975.9,241.1 979.5,242.8 983.5,243.8 987.2,245.4 990.8,247.4 994.7,248.6 998.3,250.4 1002.2,251.5 1006.0,252.8 1009.8,254.2 1013.6,255.7 1017.3,257.3 1021.0,259.0 1024.9,260.0 1028.6,261.8 1032.6,262.4 1036.4,263.8 1040.2,265.2 1043.7,267.5 1047.8,268.2 1051.3,270.2 1055.0,271.9 1059.1,272.6 1062.8,274.2 1066.3,276.3 1070.4,276.8 1074.1,278.6 1078.0,279.7 1081.4,282.0 1085.4,283.0 1089.4,283.8 1092.9,285.9 1096.9,286.7 1100.4,289.0 1104.5,289.6 1108.3,291.0 1112.0,292.7 1115.7,294.3 1119.3,296.2 1123.3,296.9 1126.9,298.8 1131.1,299.2 1134.4,301.8 1138.5,302.5 1142.0,304.6 1146.0,305.4 1149.8,306.8 1153.4,308.7 1157.2,310.2 1161.1,311.3 1164.8,313.1 1168.7,314.0 1172.5,315.4 1176.2,317.1 1179.8,319.1 1183.7,320.2 1187.6,321.3 1191.4,322.5 1195.0,324.5 1191.8,325.2 1189.0,327.0 1186.0,329.3 1181.4,328.5 1179.0,332.0 1176.0,331.2 1173.0,332.0 1170.0,332.3 1167.0,331.5 1164.0,332.0 1162.0,336.0 1158.9,335.6 1156.1,334.0 1152.9,334.0 1150.0,333.0 1146.6,332.7 1143.6,331.5 1140.8,329.8 1138.0,328.0 1133.9,326.3 1131.0,323.0 1127.3,323.5 1124.5,326.2 1121.0,327.0 1122.6,329.9 1123.9,332.9 1124.1,336.1 1121.4,339.9 1125.5,342.3 1125.9,345.5 1128.0,348.3 1126.5,351.9 1127.0,355.0 1126.5,358.5 1125.6,361.8 1123.6,364.4 1124.0,368.5 1118.5,369.0 1122.3,369.8 1125.1,372.7 1128.7,374.0 1126.1,376.1 1124.7,378.8 1124.0,382.0 1126.8,384.1 1127.1,388.6 1130.4,390.2 1135.2,390.5 1136.0,394.5 1137.8,398.4 1141.3,400.4 1145.0,402.0 1148.7,403.4 1149.8,407.2 1151.1,410.8 1154.3,412.7 1157.0,415.0 1154.9,417.9 1156.9,422.4 1154.9,425.4 1152.0,428.0 1156.8,428.3 1160.0,432.0 1159.2,435.0 1159.0,438.0 1161.2,440.2 1164.1,441.2 1165.7,444.2 1169.0,444.7 1170.7,447.6 1174.0,448.0 1172.7,450.9 1175.6,454.1 1172.3,456.9 1172.1,459.9 1173.0,463.0 1175.2,465.2 1177.5,467.3 1178.7,470.5 1180.8,472.8 1184.0,474.0 1184.0,478.0 1179.9,480.0 1178.9,483.5 1178.0,487.0 1181.8,486.3 1183.7,490.3 1186.7,491.5 1190.0,492.1 1193.1,493.0 1195.3,496.2 1198.1,497.9 1202.0,497.0 1205.2,499.7 1202.5,504.2 1205.2,507.1 1207.3,510.2 1207.0,514.0 1206.1,517.6 1204.4,520.6 1199.2,521.1 1197.7,524.3 1197.0,528.0 1195.8,531.7 1199.6,534.4 1199.1,538.0 1202.0,540.9 1200.6,544.6 1201.0,548.0 1202.8,544.6 1206.1,543.3 1208.0,540.1 1213.1,541.3 1215.0,538.0 1215.6,541.9 1217.8,544.4 1221.9,545.3 1221.7,549.8 1226.2,550.4 1229.5,552.0 1230.0,556.0 1233.6,554.7 1236.7,556.2 1240.0,556.7 1243.0,558.6 1246.4,558.5 1249.2,561.6 1252.6,561.0 1256.0,561.0 1258.4,563.8 1261.3,564.6 1264.5,564.4 1267.4,565.2 1271.1,562.9 1273.0,567.6 1276.5,566.3 1279.6,566.2 1281.7,570.1 1285.0,569.4 1288.1,569.7 1291.5,568.7 1294.0,571.0 1297.1,572.7 1298.0,576.1 1298.5,579.9 1302.2,581.1 1306.3,582.0 1307.2,585.4 1309.0,588.1 1309.7,591.7 1312.0,594.0 1314.8,596.7 1318.9,597.0 1322.0,599.0 1325.0,598.5 1328.1,597.1 1330.9,601.6 1334.0,599.5 1336.9,601.4 1340.0,598.7 1343.0,599.4 1346.0,600.0 1346.8,603.7 1348.1,606.9 1354.4,604.8 1353.8,610.0 1356.9,611.3 1360.1,612.5 1362.0,615.0 1364.9,616.9 1368.0,618.0 1371.6,614.3 1374.5,616.6 1377.4,619.0 1380.7,618.0 1383.9,617.4 1387.0,618.0 1390.8,617.1 1393.5,619.1 1395.7,622.2 1399.6,621.0 1401.8,624.4 1405.0,625.0 1404.9,619.9 1410.1,620.1 1412.1,617.1 1415.0,615.0 1417.9,616.3 1421.1,614.6 1423.8,618.1 1426.8,618.0 1430.1,615.2 1432.8,618.9 1436.0,617.0 1440.0,617.5 1442.0,621.0 1445.2,622.7 1448.0,625.0 1451.2,625.8 1454.3,622.4 1457.5,624.2 1460.6,625.9 1463.8,626.4 1466.9,625.0 1470.1,627.3 1473.2,626.5 1476.4,623.7 1479.5,624.0 1482.7,625.0 1485.8,623.7 1489.0,625.0 1490.8,629.6 1493.5,633.8 1495.4,638.3 1497.0,643.0 1499.5,646.4 1500.5,650.3 1500.6,654.5 1502.3,658.2 1503.4,662.1 1505.9,665.4 1506.1,669.7 1508.0,673.2 1509.9,676.9 1512.1,680.3 1512.8,684.3 1513.2,688.5 1514.6,692.3 1517.0,695.7 1517.7,699.7 1520.2,703.1 1521.2,707.0 1522.8,710.7 1522.6,715.1 1525.3,718.3 1525.8,722.5 1529.4,725.4 1528.8,729.9 1530.5,733.6 1532.5,737.1 1533.0,741.3 1535.4,744.6 1536.8,748.4 1538.6,752.0 1538.7,756.3 1539.4,760.3 1542.5,763.5 1542.9,767.6 1545.1,771.1 1546.5,774.9 1547.1,778.9 1548.7,782.6 1550.1,786.4 1552.0,790.0 1551.5,794.7 1551.6,799.4 1551.0,804.0 1547.0,804.4 1546.6,809.2 1544.6,812.0 1541.9,814.0 1538.6,815.2 1534.6,815.7 1533.0,819.0 1532.3,822.7 1529.9,825.1 1525.9,826.0 1525.1,829.7 1521.8,831.2 1520.0,834.0 1518.5,837.4 1518.3,840.9 1517.2,844.3 1518.0,848.0 1518.5,851.6 1518.6,855.2 1521.2,858.3 1521.0,862.0 1523.7,864.4 1523.7,868.1 1525.9,870.8 1527.0,874.0 1527.4,877.6 1530.0,880.0 1524.9,879.2 1525.1,884.4 1521.6,885.5 1521.2,890.1 1518.5,892.0 1515.0,893.0 1514.2,897.0 1517.0,900.0 1520.7,900.8 1523.9,899.7 1526.6,896.5 1531.0,900.0 1533.5,896.1 1536.4,893.8 1540.0,894.0 1538.1,890.7 1538.0,887.1 1539.1,883.4 1538.0,880.0 1541.6,879.9 1542.8,883.8 1546.2,884.2 1547.8,887.4 1551.0,888.0 1552.5,883.0 1557.5,883.6 1561.0,882.0 1562.9,884.8 1566.9,884.8 1568.8,887.5 1571.6,889.1 1574.1,891.0 1576.6,893.1 1577.9,896.6 1581.6,897.0 1583.3,900.0 1587.6,899.7 1589.1,902.9 1591.7,904.8 1594.0,907.0 1588.3,908.9 1582.7,911.2 1576.7,912.5 1571.0,914.5 1566.0,915.4 1561.0,915.7 1556.0,916.5 1551.0,916.6 1546.0,917.6 1540.9,917.4 1536.0,918.5 1530.9,918.3 1525.9,919.3 1520.9,919.4 1515.8,920.0 1510.8,920.6 1505.8,921.2 1500.9,922.1 1495.8,922.2 1490.9,923.3 1485.8,923.6 1480.9,924.5 1475.8,924.4 1470.9,925.6 1465.7,925.2 1460.7,925.6 1455.8,926.7 1450.8,927.2 1445.8,927.9 1440.8,928.5 1435.7,929.0 1430.8,929.9 1425.7,930.0 1420.7,930.3 1415.7,931.1 1410.7,931.7 1405.7,932.5 1400.7,933.1 1395.7,933.2 1390.6,933.5 1385.6,934.0 1380.6,934.8 1375.6,935.3 1370.6,935.4 1365.6,936.1 1360.6,936.7 1355.6,937.8 1350.6,938.0 1345.5,938.1 1340.5,938.8 1335.6,940.0 1330.5,939.9 1325.5,940.3 1320.5,940.9 1315.5,941.7 1310.5,942.6 1305.5,942.8 1300.5,943.8 1295.5,944.2 1290.4,944.2 1285.5,945.3 1280.5,945.9 1275.4,945.9 1270.4,946.2 1265.4,947.0 1260.4,948.0 1255.4,948.0 1250.3,948.4 1245.3,948.7 1240.4,949.9 1235.3,950.4 1230.3,950.3 1225.3,951.0 1220.3,951.8 1215.3,952.4 1210.3,953.3 1205.3,954.0 1200.3,953.9 1195.3,954.6 1190.3,955.5 1185.2,955.3 1180.3,956.7 1175.3,957.1 1170.2,957.5 1165.2,957.7 1160.2,958.2 1155.2,959.2 1150.2,959.6 1145.2,960.3 1140.1,960.1 1135.2,961.1 1130.2,962.0 1125.1,962.0 1120.1,962.4 1115.1,962.7 1110.1,963.9 1105.1,964.6 1100.1,964.8 1095.1,965.7 1090.1,966.3 1085.0,965.9 1080.1,967.2 1075.0,967.4 1070.0,967.6 1065.0,968.7 1060.0,969.0 1055.0,969.5 1050.0,968.8 1044.9,969.7 1039.9,969.0 1034.9,969.0 1029.9,969.9 1024.8,969.9 1019.8,969.6 1014.8,969.3 1009.8,969.3 1004.7,969.5 999.7,969.3 994.7,969.9 989.7,969.3 984.6,969.0 979.6,970.1 974.6,969.6 969.6,969.7 964.6,969.6 959.5,970.3 954.5,970.0 949.5,970.0 944.5,970.2 939.4,970.1 934.4,970.4 929.4,970.3 924.4,970.7 919.4,970.9 914.3,971.2 909.3,971.0 904.3,970.8 899.3,971.6 894.2,970.5 889.2,970.6 884.2,971.3 879.2,971.0 874.1,970.6 869.1,971.4 864.1,970.6 859.1,971.5 854.1,971.9 849.0,970.8 844.0,971.1 839.0,971.2 834.0,972.2 828.9,971.1 823.9,971.6 818.9,972.0 813.9,971.8 808.8,971.7 803.8,971.2 798.8,971.4 793.8,972.2 788.7,971.9 783.7,972.0 778.7,971.9 773.7,971.3 768.6,971.7 763.6,972.6 758.6,971.9 753.6,972.7 748.6,972.3 743.5,972.6 738.5,972.5 733.5,972.6 728.5,972.7 723.4,972.3 718.4,972.9 713.4,973.0 708.4,972.5 703.3,972.6 698.3,972.9 693.3,972.0 688.3,972.1 683.3,973.2 678.2,972.6 673.2,973.1 668.2,973.3 663.2,973.1 658.1,972.9 653.1,973.4 648.1,973.6 643.1,973.2 638.0,973.7 633.0,973.2 628.0,973.5 628.5,969.8 633.1,968.9 632.4,964.5 636.1,963.0 635.9,958.9 639.0,957.0 640.1,953.7 643.1,951.9 644.4,948.7 648.7,947.9 649.0,944.0 650.2,940.7 652.6,938.8 657.4,939.9 659.0,937.1 659.8,933.4 661.9,931.2 664.7,929.8 667.4,928.3 670.5,927.4 672.7,925.3 673.7,921.7 677.0,921.0 679.3,918.7 683.3,918.4 685.0,915.3 687.2,912.7 690.6,911.8 693.3,910.0 696.1,908.2 698.2,905.5 699.9,902.3 703.0,901.0 703.2,897.4 707.5,896.5 708.6,893.6 709.6,890.5 712.0,888.4 713.9,886.0 715.0,883.0 716.3,879.8 720.4,879.6 721.8,876.5 722.8,872.9 725.4,871.2 730.0,871.6 731.0,868.0 732.2,864.4 736.0,863.6 738.3,861.2 741.7,859.9 742.9,856.3 744.7,853.4 748.0,852.0 749.6,848.4 750.6,844.5 754.0,842.0 757.2,840.4 760.5,840.4 763.7,839.0 767.1,840.5 770.4,839.9 773.6,839.1 777.0,840.0 780.0,838.1 778.4,834.0 780.3,831.6 782.0,829.0 784.4,826.3 788.5,827.9 790.9,825.3 793.6,823.1 797.0,823.0 796.0,810.0 788.0,790.0 784.0,769.0 782.0,762.0 774.0,743.0 771.4,745.0 767.6,744.5 765.4,747.3 762.4,748.3 759.0,748.6 756.1,749.9 754.1,753.1 751.0,754.0 748.6,756.1 747.0,759.4 743.7,760.2 741.1,761.9 738.0,763.0 734.5,762.0 731.6,759.7 728.0,759.0 727.5,755.2 722.5,755.0 723.4,750.1 718.7,749.6 718.0,746.0 714.5,746.3 712.9,750.6 708.7,749.4 706.7,752.9 703.5,753.7 700.0,754.0 697.2,755.6 693.4,754.3 691.5,758.4 687.8,757.5 685.0,759.0 681.7,759.6 678.5,760.4 676.5,764.1 672.9,764.0 670.1,765.7 666.9,766.5 664.0,768.0 661.0,769.2 658.0,768.1 655.0,768.1 652.0,768.0 649.0,767.8 646.0,770.2 643.0,768.1 640.0,767.3 637.0,768.6 634.0,763.9 631.0,767.4 628.0,768.0 626.0,771.4 621.6,770.5 619.4,773.5 616.0,774.4 613.0,776.0 609.3,773.0 606.6,776.1 603.7,778.2 600.6,778.6 597.4,778.4 594.5,780.3 591.2,779.8 588.0,780.0 584.5,781.1 581.9,783.3 580.2,786.6 577.6,788.8 575.0,791.0 571.8,790.3 568.5,791.7 565.2,791.9 562.0,791.0 559.0,792.5 558.0,796.6 553.2,795.7 552.8,800.6 549.0,801.0 547.9,804.8 542.8,803.9 541.0,807.0 537.8,808.3 536.2,811.4 534.0,814.0 530.9,815.3 528.3,817.4 525.8,819.4 522.2,820.2 521.0,824.0 522.0,828.4 516.9,830.0 515.9,833.5 515.0,837.0 470.0,778.0"/>
<polygon fill="#fff" shape-rendering="crispEdges" points="789.0,772.0 792.4,770.1 794.5,766.8 797.0,764.0 799.3,761.8 801.9,760.2 805.0,759.3 806.6,756.1 810.0,755.6 812.4,752.1 816.2,755.4 819.3,755.1 821.7,751.7 825.1,752.9 828.0,752.0 831.8,751.5 833.7,747.9 837.2,747.0 838.9,742.9 843.0,743.0 844.7,740.0 847.5,738.6 850.0,736.8 852.0,734.2 856.2,735.0 858.8,733.3 861.0,731.0 864.1,734.4 864.5,739.0 862.2,741.3 859.8,743.5 858.9,746.8 857.6,749.7 856.4,752.8 854.0,755.0 850.3,755.4 848.7,759.6 844.0,758.0 842.3,761.9 839.0,763.0 837.2,765.9 834.1,767.2 831.8,769.6 829.1,771.5 827.2,774.3 824.0,775.5 822.4,778.9 819.7,781.5 818.3,785.1 816.0,788.0 812.7,786.1 809.0,786.8 805.3,787.9 802.0,786.0 799.0,783.8 795.1,783.1 792.0,781.0 792.4,777.5 790.3,774.9 789.0,772.0"/>
<g fill="#fff" shape-rendering="crispEdges"><rect x="801" y="752" width="2" height="3"/><rect x="804" y="752" width="3" height="2"/><rect x="792" y="727" width="2" height="2"/><rect x="808" y="751" width="1" height="3"/><rect x="808" y="751" width="2" height="2"/><rect x="809" y="748" width="3" height="3"/><rect x="799" y="719" width="2" height="3"/><rect x="796" y="746" width="3" height="2"/><rect x="804" y="743" width="2" height="1"/><rect x="797" y="746" width="3" height="2"/><rect x="794" y="748" width="3" height="2"/><rect x="804" y="752" width="3" height="2"/><rect x="802" y="740" width="1" height="1"/><rect x="796" y="744" width="2" height="2"/><rect x="800" y="737" width="1" height="1"/><rect x="812" y="731" width="1" height="2"/><rect x="808" y="722" width="2" height="2"/><rect x="802" y="717" width="1" height="3"/><rect x="809" y="735" width="2" height="2"/><rect x="808" y="733" width="3" height="3"/><rect x="808" y="755" width="2" height="1"/><rect x="796" y="723" width="1" height="1"/><rect x="803" y="751" width="2" height="3"/><rect x="810" y="719" width="2" height="2"/><rect x="794" y="754" width="2" height="2"/><rect x="805" y="754" width="2" height="2"/><rect x="852" y="735" width="2" height="2"/><rect x="847" y="733" width="1" height="2"/><rect x="862" y="750" width="2" height="1"/><rect x="859" y="746" width="2" height="2"/><rect x="843" y="735" width="2" height="2"/><rect x="857" y="738" width="2" height="2"/><rect x="844" y="738" width="1" height="1"/><rect x="853" y="735" width="1" height="1"/><rect x="857" y="732" width="2" height="1"/><rect x="843" y="751" width="1" height="2"/><rect x="861" y="750" width="1" height="2"/><rect x="844" y="751" width="2" height="2"/><rect x="852" y="739" width="2" height="2"/><rect x="856" y="735" width="1" height="1"/><rect x="1194" y="529" width="1" height="3"/><rect x="1186" y="526" width="1" height="2"/><rect x="1196" y="525" width="1" height="2"/><rect x="1187" y="535" width="1" height="3"/><rect x="1182" y="535" width="2" height="1"/><rect x="1190" y="524" width="2" height="1"/><rect x="1188" y="537" width="3" height="3"/><rect x="1183" y="524" width="3" height="1"/><rect x="1194" y="524" width="3" height="1"/><rect x="1196" y="525" width="1" height="1"/><rect x="1196" y="528" width="1" height="2"/><rect x="1197" y="523" width="2" height="1"/><rect x="1184" y="533" width="2" height="1"/><rect x="1182" y="521" width="2" height="2"/><rect x="1186" y="523" width="2" height="2"/><rect x="1196" y="529" width="1" height="1"/><rect x="1183" y="469" width="2" height="1"/><rect x="1184" y="467" width="3" height="3"/><rect x="1180" y="462" width="3" height="2"/><rect x="1184" y="466" width="1" height="3"/><rect x="1178" y="465" width="2" height="2"/><rect x="1174" y="470" width="2" height="2"/><rect x="1175" y="473" width="3" height="3"/><rect x="1178" y="473" width="2" height="3"/><rect x="1203" y="549" width="3" height="2"/><rect x="1210" y="545" width="2" height="1"/><rect x="1217" y="542" width="1" height="1"/><rect x="1206" y="549" width="1" height="1"/><rect x="1213" y="541" width="1" height="2"/><rect x="1211" y="545" width="2" height="1"/><rect x="1216" y="548" width="1" height="1"/><rect x="1210" y="545" width="2" height="1"/><rect x="1327" y="584" width="2" height="3"/><rect x="1320" y="591" width="2" height="1"/><rect x="1339" y="597" width="2" height="2"/><rect x="1340" y="590" width="2" height="3"/><rect x="1338" y="587" width="1" height="2"/><rect x="1328" y="598" width="3" height="3"/><rect x="1339" y="596" width="1" height="2"/><rect x="1343" y="597" width="1" height="2"/><rect x="1334" y="588" width="2" height="1"/><rect x="1328" y="590" width="1" height="1"/><rect x="1130" y="372" width="3" height="2"/><rect x="1128" y="374" width="3" height="1"/><rect x="1126" y="359" width="2" height="2"/><rect x="1125" y="375" width="2" height="2"/><rect x="1125" y="363" width="3" height="2"/><rect x="1123" y="369" width="1" height="2"/><rect x="1130" y="365" width="2" height="2"/><rect x="1125" y="357" width="1" height="1"/><rect x="1232" y="559" width="2" height="1"/><rect x="1228" y="560" width="3" height="2"/><rect x="1237" y="561" width="1" height="2"/><rect x="1235" y="560" width="2" height="2"/><rect x="1232" y="558" width="1" height="2"/><rect x="1234" y="561" width="1" height="2"/></g>
<g fill="#000" shape-rendering="crispEdges"><rect x="724" y="798" width="2" height="2"/><rect x="712" y="824" width="2" height="3"/><rect x="709" y="792" width="3" height="2"/><rect x="707" y="803" width="2" height="2"/><rect x="708" y="798" width="3" height="2"/><rect x="709" y="801" width="2" height="2"/><rect x="719" y="819" width="3" height="2"/><rect x="722" y="815" width="3" height="2"/><rect x="722" y="814" width="3" height="1"/><rect x="724" y="790" width="3" height="2"/><rect x="716" y="823" width="2" height="2"/><rect x="722" y="820" width="2" height="2"/><rect x="715" y="806" width="2" height="2"/><rect x="714" y="809" width="2" height="2"/><rect x="723" y="819" width="2" height="2"/><rect x="710" y="800" width="1" height="2"/><rect x="718" y="793" width="3" height="2"/><rect x="724" y="818" width="3" height="1"/><rect x="715" y="821" width="1" height="1"/><rect x="718" y="807" width="3" height="3"/><rect x="717" y="824" width="2" height="2"/><rect x="720" y="803" width="2" height="2"/><rect x="713" y="822" width="2" height="2"/><rect x="708" y="803" width="2" height="2"/><rect x="718" y="820" width="3" height="2"/><rect x="715" y="811" width="3" height="2"/><rect x="1188" y="506" width="1" height="2"/><rect x="1196" y="507" width="2" height="1"/><rect x="1194" y="504" width="3" height="3"/><rect x="1194" y="498" width="1" height="2"/><rect x="1188" y="500" width="1" height="1"/><rect x="1190" y="502" width="2" height="3"/><rect x="1190" y="491" width="2" height="3"/><rect x="1185" y="504" width="1" height="2"/><rect x="1239" y="541" width="2" height="1"/><rect x="1232" y="541" width="2" height="2"/><rect x="1233" y="548" width="2" height="2"/><rect x="1224" y="535" width="3" height="1"/><rect x="1224" y="535" width="2" height="3"/><rect x="1234" y="545" width="1" height="1"/><rect x="1237" y="537" width="2" height="2"/><rect x="1225" y="536" width="1" height="3"/><rect x="1352" y="594" width="2" height="2"/><rect x="1338" y="601" width="2" height="3"/><rect x="1348" y="597" width="1" height="1"/><rect x="1362" y="600" width="2" height="3"/><rect x="1359" y="594" width="2" height="3"/><rect x="1350" y="601" width="1" height="2"/><rect x="1356" y="593" width="2" height="3"/><rect x="1350" y="600" width="1" height="1"/><rect x="1346" y="592" width="3" height="2"/><rect x="1352" y="591" width="2" height="2"/><rect x="1533" y="858" width="1" height="3"/><rect x="1533" y="863" width="1" height="2"/><rect x="1531" y="857" width="2" height="2"/><rect x="1529" y="876" width="1" height="2"/><rect x="1540" y="860" width="2" height="3"/><rect x="1540" y="860" width="2" height="2"/><rect x="1533" y="883" width="1" height="3"/><rect x="1535" y="862" width="2" height="1"/><rect x="1142" y="378" width="3" height="2"/><rect x="1138" y="378" width="2" height="1"/><rect x="1144" y="374" width="2" height="2"/><rect x="1137" y="393" width="2" height="2"/><rect x="1141" y="380" width="2" height="1"/><rect x="1136" y="395" width="2" height="2"/></g>
<line x1="930" y1="274" x2="1121" y2="350.6" stroke="#e6d84a" stroke-width="1.3"/>
<polygon fill="#f3ea22" points="1311,585 1326.1,600.9 1364.4,638.3 1453.2,730 1484.5,763 1494.5,763.5 1462.5,730 1369.6,638.3 1330,600.9 1314.5,583"/>
<polyline fill="none" stroke="#f3ea22" stroke-width="7.1" stroke-linejoin="round" points="930.5,274 544.3,472 555.8,630 475.3,778.3 612,948.5 813.7,894.5 835,936 985,945 1065,949 1492,763"/>
<polyline fill="none" stroke="#f3ea22" stroke-width="7" stroke-linejoin="round" points="1124.5,340.5 1130.5,326 1150.5,340.8 1160,338.6 1318,398 1336,404.5 1372,408.6 1352.8,458.7 1337.5,497 1319.6,553 1309,565"/>
<polyline fill="none" stroke="#000" stroke-width="7" stroke-linejoin="round" points="1124.5,345 1154,372 1226,494.5 1300,562.6 1373,637.5"/>
<polyline fill="none" stroke="#000" stroke-width="6.5" stroke-linejoin="round" stroke-linecap="butt" points="1526,800 1536,819 1551.5,850 1553.5,866 1553.5,884"/>
<g clip-path="url(#rp)" stroke="#e0503a" stroke-width="1" shape-rendering="crispEdges"><line x1="651.5" y1="500" x2="651.5" y2="835"/><line x1="659.4" y1="500" x2="659.4" y2="835"/><line x1="667.3" y1="500" x2="667.3" y2="835"/><line x1="675.2" y1="500" x2="675.2" y2="835"/><line x1="683.1" y1="500" x2="683.1" y2="835"/><line x1="691.0" y1="500" x2="691.0" y2="835"/><line x1="698.9" y1="500" x2="698.9" y2="835"/><line x1="706.8" y1="500" x2="706.8" y2="835"/><line x1="714.7" y1="500" x2="714.7" y2="835"/><line x1="722.6" y1="500" x2="722.6" y2="835"/><line x1="730.5" y1="500" x2="730.5" y2="835"/><line x1="738.4" y1="500" x2="738.4" y2="835"/><line x1="746.3" y1="500" x2="746.3" y2="835"/><line x1="754.2" y1="500" x2="754.2" y2="835"/><line x1="762.1" y1="500" x2="762.1" y2="835"/><line x1="770.0" y1="500" x2="770.0" y2="835"/><line x1="777.9" y1="500" x2="777.9" y2="835"/><line x1="785.8" y1="500" x2="785.8" y2="835"/><line x1="793.7" y1="500" x2="793.7" y2="835"/><line x1="801.6" y1="500" x2="801.6" y2="835"/><line x1="809.5" y1="500" x2="809.5" y2="835"/><line x1="817.4" y1="500" x2="817.4" y2="835"/><line x1="825.3" y1="500" x2="825.3" y2="835"/><line x1="833.2" y1="500" x2="833.2" y2="835"/><line x1="841.1" y1="500" x2="841.1" y2="835"/><line x1="849.0" y1="500" x2="849.0" y2="835"/><line x1="856.9" y1="500" x2="856.9" y2="835"/><line x1="864.8" y1="500" x2="864.8" y2="835"/><line x1="872.7" y1="500" x2="872.7" y2="835"/><line x1="880.6" y1="500" x2="880.6" y2="835"/><line x1="888.5" y1="500" x2="888.5" y2="835"/><line x1="896.4" y1="500" x2="896.4" y2="835"/><line x1="904.3" y1="500" x2="904.3" y2="835"/><line x1="912.2" y1="500" x2="912.2" y2="835"/><line x1="920.1" y1="500" x2="920.1" y2="835"/><line x1="928.0" y1="500" x2="928.0" y2="835"/><line x1="935.9" y1="500" x2="935.9" y2="835"/><line x1="943.8" y1="500" x2="943.8" y2="835"/><line x1="951.7" y1="500" x2="951.7" y2="835"/><line x1="959.6" y1="500" x2="959.6" y2="835"/><line x1="967.5" y1="500" x2="967.5" y2="835"/><line x1="975.4" y1="500" x2="975.4" y2="835"/><line x1="983.3" y1="500" x2="983.3" y2="835"/><line x1="991.2" y1="500" x2="991.2" y2="835"/><line x1="999.1" y1="500" x2="999.1" y2="835"/><line x1="1007.0" y1="500" x2="1007.0" y2="835"/><line x1="1014.9" y1="500" x2="1014.9" y2="835"/><line x1="1022.8" y1="500" x2="1022.8" y2="835"/><line x1="1030.7" y1="500" x2="1030.7" y2="835"/><line x1="1038.6" y1="500" x2="1038.6" y2="835"/><line x1="1046.5" y1="500" x2="1046.5" y2="835"/><line x1="1054.4" y1="500" x2="1054.4" y2="835"/><line x1="1062.3" y1="500" x2="1062.3" y2="835"/><line x1="1070.2" y1="500" x2="1070.2" y2="835"/><line x1="1078.1" y1="500" x2="1078.1" y2="835"/><line x1="1086.0" y1="500" x2="1086.0" y2="835"/><line x1="1093.9" y1="500" x2="1093.9" y2="835"/><line x1="1101.8" y1="500" x2="1101.8" y2="835"/><line x1="1109.7" y1="500" x2="1109.7" y2="835"/><line x1="1117.6" y1="500" x2="1117.6" y2="835"/><line x1="1125.5" y1="500" x2="1125.5" y2="835"/><line x1="1133.4" y1="500" x2="1133.4" y2="835"/><line x1="1141.3" y1="500" x2="1141.3" y2="835"/><line x1="1149.2" y1="500" x2="1149.2" y2="835"/><line x1="1157.1" y1="500" x2="1157.1" y2="835"/><line x1="1165.0" y1="500" x2="1165.0" y2="835"/><line x1="1172.9" y1="500" x2="1172.9" y2="835"/><line x1="1180.8" y1="500" x2="1180.8" y2="835"/><line x1="1188.7" y1="500" x2="1188.7" y2="835"/></g>
<text x="874" y="806" font-family="Liberation Sans, sans-serif" font-size="11" fill="#7d6a1c" transform="rotate(-16 874 806)">nsg_1937</text>
<polyline fill="none" stroke="url(#og)" stroke-width="4" stroke-linejoin="round" points="1208.5,471.5 1110,425.5 1067.7,415.8 1046,429.8 1025.6,463 990,526.8 985,593 881,704 784.3,769.4 795.8,810 838,807.7 1000,762 1355,629"/>
<polygon fill="none" stroke="#cc2f33" stroke-width="3.6" stroke-linejoin="round" points="647.7,802.6 700.0,754.0 774.0,680.0 887.0,566.4 938.0,596.0 1159.0,509.0 1187.0,598.0 1180.0,697.0 1172.0,762.0 1111.0,782.6 1000.0,789.0 955.0,792.5 863.0,813.0 733.0,827.0 656.6,828.0"/>
<path fill="none" stroke="#ee1616" stroke-width="2.7" d="M911,467.6 C975,466 1025,490 1064,503.8 C1105,517 1150,524 1199,521.5"/>
<polygon fill="#ee1616" points="1220,518.6 1194.5,514.8 1198.5,527.2"/>
<path fill="none" stroke="#ee1616" stroke-width="2.7" d="M802,490 C803,530 783,565 766.4,593 C745,628 705,675 680,722 C660,760 646,800 644.4,838"/>
<polygon fill="#ee1616" points="644.4,860.5 637.3,836.5 651.3,835.8"/>
<rect x="698.8" y="450.2" width="212.4" height="39.6" rx="7" ry="7" fill="#ffff82"/>
<text x="803" y="475.9" text-anchor="middle" font-family="Liberation Sans, sans-serif" font-weight="bold" font-size="19.6" fill="#0c0c0c">weiss &lt; 668.5 mNN</text>
<rect x="806" y="911" width="179" height="43" rx="8" ry="8" fill="#ffff82"/>
<text x="893.3" y="939.9" text-anchor="middle" font-family="Liberation Sans, sans-serif" font-weight="bold" font-size="22.8" fill="#0c0c0c">Bild 7</text>
</svg></div><div class="in" style="left:8px;top:1003px;width:279px;height:22px;border-color:#7a7a7a"></div><svg class="abs" style="left:15px;top:1006px" width="16" height="16" viewBox="0 0 16 16" fill="none" stroke="#8a8a8a" stroke-width="1.3"><circle cx="6.2" cy="6.2" r="4"/><path d="M9.2 9.2L13.5 13.5"/></svg><span class="t" style="left:37.0px;top:1004.9px;height:20px;line-height:20px;font-size:13.0px;letter-spacing:-0.048px;color:#6e6e6e;">Zu suchender Typ (Strg+K)</span><span class="t" style="left:728.0px;top:1004.9px;height:20px;line-height:20px;font-size:13.0px;letter-spacing:-0.218px;color:#000;">Koordinate</span><div class="in" style="left:792px;top:1003px;width:111px;height:22px"></div><span class="t" style="left:799.0px;top:1004.9px;height:20px;line-height:20px;font-size:13.0px;letter-spacing:-0.115px;color:#000;">473439,5397257</span><svg class="abs" style="left:904.0px;top:1003.0px" width="22" height="22" viewBox="0 0 24 24" ><ellipse cx="12" cy="13" rx="6" ry="8" fill="#fff" stroke="#111" stroke-width="1.5" transform="rotate(-25 12 13)"/><path d="M5 8L15 4" stroke="#111" stroke-width="1.3"/><path d="M9 6L11 11" stroke="#111" stroke-width="1.3"/><circle cx="14" cy="16" r="3" fill="#fff" stroke="#111" stroke-width="1.4"/><path d="M2 3L8 10M18 2L20 4M21 7L22 8" stroke="#111" stroke-width="1.3"/></svg><span class="t" style="left:939.5px;top:1004.9px;height:20px;line-height:20px;font-size:13.0px;letter-spacing:-0.468px;color:#000;">Maßstab</span><div class="in" style="left:990px;top:1003px;width:91px;height:22px"></div><span class="t" style="left:995.0px;top:1004.9px;height:20px;line-height:20px;font-size:13.0px;letter-spacing:0.040px;color:#000;">1:5500</span><svg class="abs" style="left:1062px;top:1009px" width="12" height="8" viewBox="0 0 12 8"><path d="M1 1.2L6 6.2L11 1.2" fill="none" stroke="#333" stroke-width="1.2"/></svg><svg class="abs" style="left:1090.0px;top:1004.0px" width="20" height="20" viewBox="0 0 24 24" ><path d="M7.500 11V7.500Q7.500 3 12 3Q16.500 3 16.500 7.500V11" fill="none" stroke="#9a9a9a" stroke-width="2.2"/><rect x="4.5" y="10.5" width="15" height="11" rx="1.5" fill="#7a7a7a"/></svg><span class="t" style="left:1117.0px;top:1004.9px;height:20px;line-height:20px;font-size:13.0px;letter-spacing:-0.083px;color:#000;">Vergrößerung</span><div class="in" style="left:1199px;top:1003px;width:87px;height:22px"></div><span class="t" style="left:1203.0px;top:1004.9px;height:20px;line-height:20px;font-size:13.0px;letter-spacing:-0.062px;color:#000;">100%</span><svg class="abs" style="left:1267.5px;top:1005.0px" width="18" height="18" viewBox="0 0 24 24" ><rect x="3" y="1" width="18" height="22" fill="#f4f4f4" stroke="#c0c0c0"/><path d="M7.500 9.500L12 4.500L16.500 9.500ZM7.500 14.500L12 19.500L16.500 14.500Z" fill="#111"/></svg><span class="t" style="left:1295.0px;top:1004.9px;height:20px;line-height:20px;font-size:13.0px;letter-spacing:-0.267px;color:#000;">Drehung</span><div class="in" style="left:1352px;top:1003px;width:86px;height:22px"></div><span class="t" style="left:1355.5px;top:1004.9px;height:20px;line-height:20px;font-size:13.0px;letter-spacing:0.223px;color:#000;">0,0 °</span><svg class="abs" style="left:1419.5px;top:1005.0px" width="18" height="18" viewBox="0 0 24 24" ><rect x="3" y="1" width="18" height="22" fill="#f4f4f4" stroke="#c0c0c0"/><path d="M7.500 9.500L12 4.500L16.500 9.500ZM7.500 14.500L12 19.500L16.500 14.500Z" fill="#111"/></svg><div class="cb" style="left:1443px;top:1006px;border-color:#333"><svg width="14" height="14" viewBox="0 0 14 14"><path d="M2.2 7.2L5.6 10.6L12 3.4" fill="none" stroke="#111" stroke-width="1.3"/></svg></div><span class="t" style="left:1465.0px;top:1004.9px;height:20px;line-height:20px;font-size:13.0px;letter-spacing:-0.435px;color:#000;">Zeichnen</span><svg class="abs" style="left:1532.5px;top:1004.0px" width="20" height="20" viewBox="0 0 24 24" ><circle cx="12" cy="11" r="8.5" fill="none" stroke="#7a7a7a" stroke-width="1.3"/><path d="M3.500 11H20.500M5 6.500H19M5 15.500H19M12 2.500V19.500M12 2.500Q6 11 12 19.500M12 2.500Q18 11 12 19.5" fill="none" stroke="#7a7a7a" stroke-width="1.1"/><path d="M1 9L12 4L23 9" fill="none" stroke="#6a6a6a" stroke-width="1.3"/></svg><span class="t" style="left:1557.0px;top:1004.9px;height:20px;line-height:20px;font-size:13.0px;letter-spacing:-0.589px;color:#000;">EPSG:25832</span><svg class="abs" style="left:1644.0px;top:1003.0px" width="22" height="22" viewBox="0 0 24 24" ><path d="M12 2.500C18 2.500 22.500 6 22.500 11C22.500 14 21 16 19 17.500L20.500 22L15 19C14 19.300 13 19.500 12 19.500C6 19.500 1.500 16 1.500 11C1.500 6 6 2.500 12 2.500Z" fill="#5a5a5a"/><circle cx="7.5" cy="11" r="1.5" fill="#fff"/><circle cx="12" cy="11" r="1.5" fill="#fff"/><circle cx="16.5" cy="11" r="1.5" fill="#fff"/></svg><svg class="abs" style="left:1676.0px;top:1002.0px" width="24" height="24" viewBox="0 0 24 24" ><path d="M2.500 7.500H8Q7 3.500 10 3.500Q13 3.500 12 7.500H15.500V11H13" fill="#c8c8c8" stroke="#5a5a5a" stroke-width="1.1"/><path d="M2.500 7.500L15.500 19.500V16H2.500Z" fill="#b4b4b4"/><path d="M2.500 7.500V19.500H15.500V16.500M2.500 19.500L8 13.5" fill="none" stroke="#5a5a5a" stroke-width="1.1"/><path d="M15.500 11Q21 11 20.500 7Q20 4.500 17 5M15.500 16.500Q22 16 21.500 8" fill="none" stroke="#5a5a5a" stroke-width="1.1"/></svg><svg class="abs" style="left:1707px;top:1015px" width="13" height="13" viewBox="0 0 13 13" fill="#b9c4b0"><rect x="8" y="1" width="3" height="3"/><rect x="4" y="5" width="3" height="3" fill="#c0b8c4"/><rect x="8" y="5" width="3" height="3"/><rect x="0" y="9" width="3" height="3" fill="#cfcfcf"/><rect x="4" y="9" width="3" height="3"/><rect x="8" y="9" width="3" height="3"/></svg></body></html>
